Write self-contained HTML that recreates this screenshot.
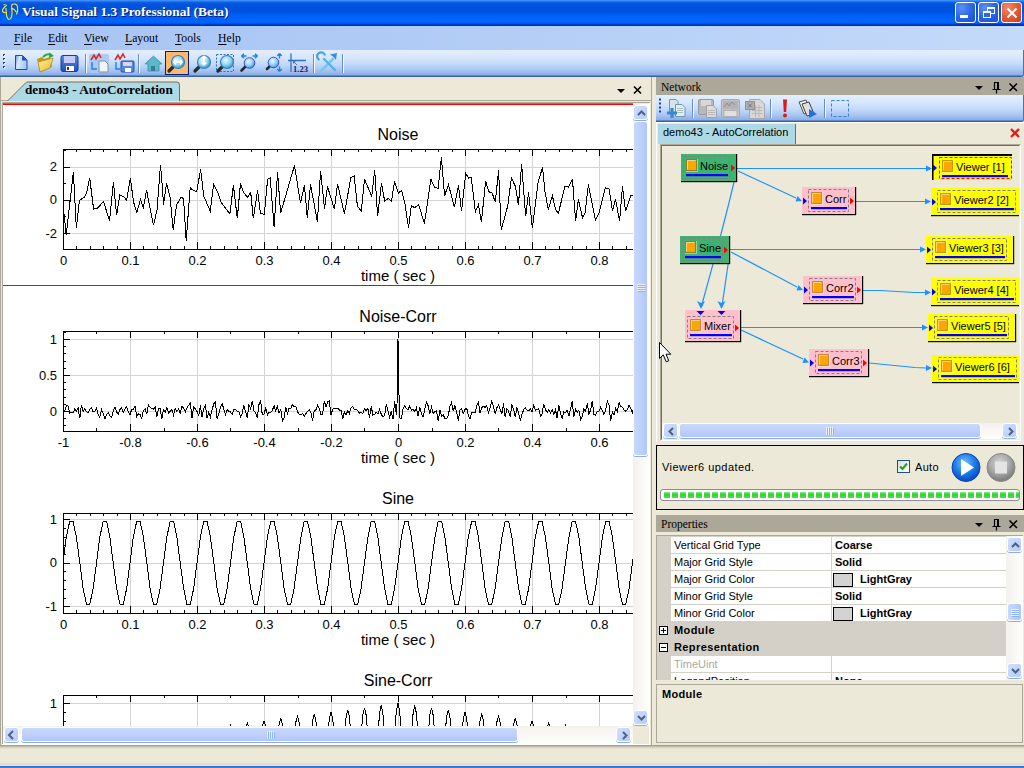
<!DOCTYPE html>
<html><head><meta charset="utf-8">
<style>
*{margin:0;padding:0;box-sizing:border-box}
html,body{width:1024px;height:768px;overflow:hidden;background:#ECE9D8;font-family:"Liberation Sans",sans-serif;font-size:11px;color:#000}
.a{position:absolute}
.serif{font-family:"Liberation Serif",serif}
/* title bar */
#title{left:0;top:0;width:1024px;height:26px;background:linear-gradient(#4A98FF 0,#2F80F8 1px,#0A5EE4 2.5px,#0052DC 5px,#0052DD 11px,#005EF4 15px,#0066FF 21px,#0060F8 23px,#0046D8 24px,#0030B0 25px,#0030B0 26px)}
#title .t{left:22px;top:4px;color:#fff;font:bold 13.4px "Liberation Serif",serif;text-shadow:1px 1px 0 #0A1C6A;white-space:nowrap;letter-spacing:0}
.tb{top:2px;width:21px;height:21px;border:1px solid #fff;border-radius:3px;background:radial-gradient(circle at 30% 25%,#5F8FF6 0,#2663E7 55%,#1B4FD6 100%)}
#menu{left:0;top:26px;width:1024px;height:24px;background:linear-gradient(to right,#A8C4F3,#B0CBF5 40%,#C4DAFA)}
#menu span{position:absolute;top:4px;font:13px "Liberation Serif",serif;white-space:nowrap;transform:scaleX(0.9);transform-origin:0 0}
#menu u{text-decoration:underline;text-underline-offset:2px}
#tbpanel{left:0;top:50px;width:1024px;height:27px;background:linear-gradient(to right,#A7C3F3,#C5DAF9)}
#tool{left:0;top:50px;width:1024px;height:27px;border-radius:0 0 3px 0;box-shadow:inset -1px 0 0 #4A70B0;background:linear-gradient(#E3EFFF 0,#D6E6FD 8px,#C4DAFA 14px,#A9C6F3 20px,#8AAEE8 25px,#3B619C 26px,#3B619C 27px)}
.sep{width:1px;height:19px;background:#6A8CCB;box-shadow:1px 0 0 #F8F8F8}
/* doc pane */
#doc{left:0;top:77px;width:652px;height:668px;background:#ECE9D8;border-left:1px solid #ACA899}
#docr{left:651px;top:77px;width:1px;height:668px;background:#ACA899}
#plot{left:3px;top:104px;width:630px;height:622px;background:#fff;overflow:hidden}
.sb{background:linear-gradient(to right,#F3F1EC,#FEFEFB)}
.btn{border:1px solid #fff;border-radius:3px;box-shadow:0 1px 0 #8FADE3;background:linear-gradient(135deg,#D2E0FD,#C3D5FD 50%,#B4CBF8)}
.net{font-size:11px}
.node{position:absolute;height:28px}
.tl{font:13px "Liberation Sans",sans-serif}
.tt{font:16px "Liberation Sans",sans-serif}
.ta{font:15px "Liberation Sans",sans-serif}
.cap{background:#ACA899;height:18px}
.pg{position:absolute;left:671px;width:335px;height:17px;background:#fff;border-bottom:1px solid #D4D0C8}
.pg span{position:absolute;top:3px;white-space:nowrap}
</style></head>
<body>
<!-- TITLE BAR -->
<div id="title" class="a">
  <svg class="a" style="left:0;top:0" width="20" height="22" viewBox="0 0 20 22">
    <path d="M3.5 4.5 L7 5.5 M6.5 5.5 C4 7.5 2 9.5 2.5 11 C3 12.5 5 13 7 12.5 M6 8 C6 13 7 19 9 19.5 C11 19.5 12.5 15.5 12 11 C11.5 8 11 6 12 4.5 C14 3.5 17 4 17.5 6.5 C18 9 17.5 12 16.5 14.5 M11 9 C13 8 15 9.5 16 12" fill="none" stroke="#E6E632" stroke-width="1.2"/>
    <rect x="8" y="11" width="2" height="1.2" fill="#C02020"/>
  </svg>
  <div class="a t">Visual Signal 1.3 Professional (Beta)</div>
  <div class="a tb" style="left:955px"><div class="a" style="left:4px;top:12px;width:8px;height:3px;background:#fff"></div></div>
  <div class="a tb" style="left:978px">
    <div class="a" style="left:8px;top:4px;width:8px;height:7px;border:1px solid #fff;border-top-width:2px"></div>
    <div class="a" style="left:4px;top:8px;width:8px;height:7px;border:1px solid #fff;border-top-width:2px;background:#2A66E8"></div>
  </div>
  <div class="a tb" style="left:1001px;background:radial-gradient(circle at 30% 25%,#F08A6A 0,#E3552D 55%,#C8401A 100%)">
    <svg class="a" style="left:4px;top:4px" width="12" height="12"><path d="M1.5 1.5 L10.5 10.5 M10.5 1.5 L1.5 10.5" stroke="#fff" stroke-width="2"/></svg>
  </div>
</div>
<!-- MENU -->
<div id="menu" class="a">
  <span style="left:14px"><u>F</u>ile</span>
  <span style="left:48px"><u>E</u>dit</span>
  <span style="left:84px"><u>V</u>iew</span>
  <span style="left:125px"><u>L</u>ayout</span>
  <span style="left:175px"><u>T</u>ools</span>
  <span style="left:218px"><u>H</u>elp</span>
</div>
<!-- TOOLBAR -->
<div id="tbpanel" class="a"></div>
<div id="tool" class="a">
<svg class="a" style="left:0;top:0" width="360" height="27">
<defs>
  <radialGradient id="lens" cx="40%" cy="35%" r="65%"><stop offset="0" stop-color="#E8F8FF"/><stop offset="0.6" stop-color="#8ED3F0"/><stop offset="1" stop-color="#3C9AD0"/></radialGradient>
  <linearGradient id="flop" x1="0" y1="0" x2="0" y2="1"><stop offset="0" stop-color="#5B8BE8"/><stop offset="1" stop-color="#1F4FB8"/></linearGradient>
  <linearGradient id="fold" x1="0" y1="0" x2="1" y2="1"><stop offset="0" stop-color="#FFF3A0"/><stop offset="1" stop-color="#E8B820"/></linearGradient>
  <g id="mag">
    <path d="M3 19 L8 14" stroke="#2A2A2A" stroke-width="3.2" stroke-linecap="round"/>
    <circle cx="12" cy="10" r="6.5" fill="url(#lens)" stroke="#3E7FB8" stroke-width="1.2"/>
  </g>
</defs>
<!-- grip -->
<g fill="#27417F"><rect x="3" y="4" width="2" height="2"/><rect x="3" y="8" width="2" height="2"/><rect x="3" y="12" width="2" height="2"/><rect x="3" y="16" width="2" height="2"/></g>
<g fill="#fff"><rect x="4" y="5" width="1.5" height="1.5"/><rect x="4" y="9" width="1.5" height="1.5"/><rect x="4" y="13" width="1.5" height="1.5"/><rect x="4" y="17" width="1.5" height="1.5"/></g>
<!-- new -->
<linearGradient id="pg1" x1="0" y1="0" x2="1" y2="0.3"><stop offset="0" stop-color="#5C8EE0"/><stop offset="0.35" stop-color="#D8E8FF"/><stop offset="1" stop-color="#A8C8F8"/></linearGradient>
<path d="M15.5 5.5 H22.5 L27 10 V19.5 H15.5 Z" fill="url(#pg1)" stroke="#2048A8"/>
<path d="M22 5.5 L27 10.5 H22 Z" fill="#2050C0"/>
<!-- open -->
<path d="M37 9 L42 7 L44 9 L50 7 L52 17 L40 22 Z" fill="#C89810"/>
<path d="M38 12 L53 8 L50 18 L40 22 Z" fill="url(#fold)" stroke="#B08010" stroke-width="0.7"/>
<path d="M43 7 Q47 3 51 5" fill="none" stroke="#28A838" stroke-width="2"/><path d="M49.5 2.5 L54 6 L49 8 Z" fill="#28A838"/>
<!-- save -->
<rect x="61" y="5.5" width="17" height="16" rx="2" fill="url(#flop)" stroke="#1A3C90"/>
<rect x="64" y="6" width="11" height="7" fill="#C8C8F8"/>
<rect x="66" y="16" width="8" height="5" fill="#fff"/><rect x="67" y="17" width="2" height="3" fill="#1A3C90"/>
<rect class="sep" x="85" y="4" width="1" height="19" fill="#6A8CCB"/><rect x="86" y="4" width="1" height="19" fill="#F8F8F8"/>
<!-- export doc -->
<rect x="89" y="4" width="20" height="19" rx="2" fill="#A8C8F4" opacity="0.9"/>
<path d="M91 10 L94 5 L96 9 L99 4 L101 8" fill="none" stroke="#E02020" stroke-width="1.5"/>
<path d="M99 11 H105 L108 14 V22 H99 Z" fill="#F0F4F8" stroke="#8090A0"/>
<path d="M92 12 V19 H97" fill="none" stroke="#2080E0" stroke-width="1.4"/>
<!-- export floppy -->
<path d="M115 10 L118 5 L120 9 L123 4 L125 8" fill="none" stroke="#E02020" stroke-width="1.5"/>
<rect x="121" y="11" width="13" height="11" rx="1" fill="#5A86E0" stroke="#2050B0"/>
<rect x="123" y="12" width="9" height="4" fill="#D0D8F8"/><rect x="125" y="18" width="6" height="4" fill="#fff"/>
<path d="M116 12 V19 H120" fill="none" stroke="#2080E0" stroke-width="1.4"/>
<rect x="138" y="4" width="1" height="19" fill="#6A8CCB"/><rect x="139" y="4" width="1" height="19" fill="#F8F8F8"/>
<!-- home -->
<path d="M145 14 L153.5 6 L162 14 L159 14 V21 H148 V14 Z" fill="#5CB8C8" stroke="#3890A8" stroke-width="0.8"/>
<rect x="151" y="16" width="4" height="5" fill="#2E8098"/>
<!-- checked zoom -->
<rect x="165.5" y="1.5" width="23" height="23" fill="#FBB870" stroke="#0A1E78"/>

<use href="#mag" x="166" y="2"/>
<path d="M173.5 12 h9 M173.5 12 l2.5 -2.5 M173.5 12 l2.5 2.5 M182.5 12 l-2.5 -2.5 M182.5 12 l-2.5 2.5" stroke="#fff" stroke-width="1.4" fill="none"/>
<!-- zoom v -->
<use href="#mag" x="192" y="2"/>
<path d="M204 6 v9 M204 6 l-2.5 2.5 M204 6 l2.5 2.5 M204 15 l-2.5 -2.5 M204 15 l2.5 -2.5" stroke="#fff" stroke-width="1.5" fill="none"/>
<!-- zoom rect -->
<rect x="216.5" y="4.5" width="17" height="17" fill="none" stroke="#3070D0" stroke-dasharray="2 1.5"/>
<use href="#mag" x="215" y="2"/>
<!-- zoom h arrows -->
<path d="M241.5 20.5 L246 16" stroke="#2A2A2A" stroke-width="2.6" stroke-linecap="round"/>
<circle cx="249.5" cy="13" r="5.3" fill="url(#lens)" stroke="#3A3AE8" stroke-width="0.9"/>
<path d="M241.5 6 h5 M241.5 6 l2.5 -2.2 M241.5 6 l2.5 2.2 M257.5 6 h-5 M257.5 6 l-2.5 -2.2 M257.5 6 l-2.5 2.2" stroke="#2080E0" stroke-width="1.4" fill="none"/>
<!-- zoom v arrows -->
<path d="M267 19 L271.5 14.5" stroke="#2A2A2A" stroke-width="2.6" stroke-linecap="round"/>
<circle cx="273.5" cy="12.5" r="5.3" fill="url(#lens)" stroke="#3A3AE8" stroke-width="0.9"/>
<path d="M279.5 3.5 v5 M279.5 3.5 l-2.2 2.5 M279.5 3.5 l2.2 2.5 M279.5 21.5 v-5 M279.5 21.5 l-2.2 -2.5 M279.5 21.5 l2.2 -2.5" stroke="#2080E0" stroke-width="1.4" fill="none"/>
<!-- 1.23 -->
<path d="M291 3.5 V22 M288 10.5 H306" stroke="#3070D0" stroke-width="1.3"/>
<path d="M297 15 L293.5 11.5 M293.5 11.5 h2 M293.5 11.5 v2" stroke="#3070D0" stroke-width="0.9" fill="none"/>
<text x="293" y="21.5" font-family="Liberation Serif" font-weight="bold" font-size="8.5" fill="#1A2060">1.23</text>
<rect x="313" y="4" width="1" height="19" fill="#6A8CCB"/><rect x="314" y="4" width="1" height="19" fill="#F8F8F8"/>
<!-- tools -->
<path d="M321 21 L333 9" stroke="#78C8EE" stroke-width="2.6" stroke-linecap="round"/>
<path d="M324 9 L335 20" stroke="#58B0E8" stroke-width="2.4" stroke-linecap="round"/>
<path d="M319.5 10 A4 4 0 1 1 325 5.5" fill="none" stroke="#4AA0E0" stroke-width="2.2"/>
<path d="M330 4.5 L337 3 L336 10 Q333 6 330 4.5 Z" fill="#3890D8"/>
<rect x="342" y="4" width="1" height="19" fill="#6A8CCB"/><rect x="343" y="4" width="1" height="19" fill="#F8F8F8"/>
</svg>

</div>
<!-- DOC PANE -->
<div id="doc" class="a"></div><div id="docr" class="a"></div>
<!-- tab strip -->
<div class="a" style="left:0;top:100px;width:651px;height:1px;background:#ACA899"></div>
<svg class="a" style="left:0;top:77px" width="190" height="25">
  <path d="M7.5 24 L25.5 6 Q26.5 5 28 5 L177 5 Q179.5 5 179.5 8 L179.5 24" fill="#ADD8E6" stroke="#716F64" stroke-width="1"/>
</svg>
<div class="a serif" style="left:25px;top:82px;font:bold 13.2px 'Liberation Serif',serif;white-space:nowrap">demo43 - AutoCorrelation</div>
<svg class="a" style="left:616px;top:85px" width="30" height="12">
  <path d="M1 4 L9 4 L5 8 Z" fill="#000"/>
  <path d="M18 1.5 L25 8.5 M25 1.5 L18 8.5" stroke="#000" stroke-width="1.6"/>
</svg>
<!-- content frame -->
<div class="a" style="left:2px;top:102px;width:648px;height:1px;background:#ACA899"></div>
<div class="a" style="left:2px;top:103px;width:631px;height:1px;background:#808080"></div>
<div class="a" style="left:2px;top:102px;width:1px;height:643px;background:#ACA899"></div>
<div class="a" style="left:649px;top:103px;width:1px;height:642px;background:#fff"></div>
<div class="a" style="left:2px;top:744px;width:648px;height:1px;background:#fff"></div>
<div id="plot" class="a">
<svg width="630" height="622" viewBox="3 104 630 622" style="display:block">
<line x1="3" y1="104.5" x2="633" y2="104.5" stroke="#f00" stroke-width="1"/>
<line x1="3" y1="285.5" x2="633" y2="285.5" stroke="#f00" stroke-width="1"/>
<line x1="130.5" y1="149" x2="130.5" y2="249" stroke="#d3d3d3"/>
<line x1="197.5" y1="149" x2="197.5" y2="249" stroke="#d3d3d3"/>
<line x1="264.5" y1="149" x2="264.5" y2="249" stroke="#d3d3d3"/>
<line x1="331.5" y1="149" x2="331.5" y2="249" stroke="#d3d3d3"/>
<line x1="398.5" y1="149" x2="398.5" y2="249" stroke="#d3d3d3"/>
<line x1="465.5" y1="149" x2="465.5" y2="249" stroke="#d3d3d3"/>
<line x1="532.5" y1="149" x2="532.5" y2="249" stroke="#d3d3d3"/>
<line x1="599.5" y1="149" x2="599.5" y2="249" stroke="#d3d3d3"/>
<line x1="666.5" y1="149" x2="666.5" y2="249" stroke="#d3d3d3"/>
<line x1="733.5" y1="149" x2="733.5" y2="249" stroke="#d3d3d3"/>
<line x1="63" y1="167.5" x2="733" y2="167.5" stroke="#d3d3d3"/>
<line x1="63" y1="200.5" x2="733" y2="200.5" stroke="#d3d3d3"/>
<line x1="63" y1="233.5" x2="733" y2="233.5" stroke="#d3d3d3"/>
<polyline fill="none" stroke="#000" stroke-width="1" shape-rendering="crispEdges" points="63.6,209.9 66.2,234.6 70.4,198.2 73.4,172.1 76.3,228.1 79.5,200.1 84.1,197.5 86.7,193.0 89.7,178.0 93.6,209.2 97.8,207.9 103.6,201.4 109.5,221.0 113.4,181.9 116.6,215.1 119.9,194.9 123.8,196.9 126.7,200.1 130.3,178.0 133.6,202.1 136.8,212.5 140.5,199.5 143.3,207.9 146.6,190.4 153.5,225.3 157.0,209.9 158.9,185.2 160.5,165.4 162.2,185.2 163.5,204.7 166.5,183.2 170.0,196.9 173.2,230.1 176.5,205.3 181.0,197.1 183.6,198.8 186.2,240.5 190.2,187.8 193.4,190.4 196.7,191.7 200.6,169.5 203.8,196.2 210.3,211.2 213.6,184.5 217.5,191.7 221.4,202.7 229.9,213.8 233.4,185.2 237.3,218.4 240.5,183.2 243.5,192.3 247.7,197.5 250.7,192.3 253.3,218.4 257.6,190.4 260.4,213.2 264.3,214.5 267.6,179.3 270.2,178.0 274.1,226.8 277.6,172.1 280.6,213.2 294.5,165.4 300.5,203.4 304.4,185.2 307.3,217.7 310.5,184.5 317.4,221.6 320.6,171.1 324.5,208.6 327.5,186.5 334.4,209.2 337.5,183.6 344.4,213.8 350.9,177.3 354.1,176.0 357.4,206.0 361.3,211.2 364.5,179.3 371.7,196.2 374.7,170.2 377.6,216.4 381.5,183.2 384.7,201.4 388.0,198.4 391.6,201.4 394.5,181.2 398.4,193.0 401.6,190.4 404.9,203.4 408.5,227.5 411.4,205.3 414.7,207.9 418.6,204.4 424.4,223.6 430.9,179.3 434.6,187.1 438.1,188.4 441.4,157.2 444.6,195.6 448.5,184.5 454.3,207.3 458.5,185.2 461.5,211.2 465.7,173.4 468.6,178.0 471.2,177.3 475.4,211.8 478.4,204.7 481.4,222.3 485.6,181.2 488.8,191.7 492.1,193.0 495.3,202.1 498.6,170.2 501.2,230.1 507.7,206.0 511.4,178.0 515.5,186.5 518.4,205.3 521.6,164.3 525.7,216.4 528.5,192.3 532.4,228.1 538.3,181.2 542.6,167.6 544.8,190.4 548.3,209.9 552.3,195.6 555.8,209.9 558.4,213.2 564.9,186.5 568.2,187.1 572.5,179.7 575.6,221.0 578.4,199.5 582.5,217.7 585.1,212.5 588.4,184.5 595.5,220.3 598.8,213.8 605.3,187.8 609.2,189.1 612.5,211.2 615.5,199.5 619.6,221.0 622.5,186.5 625.5,211.2 630.7,195.6 634.0,195.6"/>
<rect x="63.5" y="149.5" width="670" height="100" fill="none" stroke="#000"/>
<line x1="63.5" y1="149" x2="63.5" y2="156" stroke="#000"/>
<line x1="63.5" y1="249" x2="63.5" y2="242" stroke="#000"/>
<line x1="76.5" y1="149" x2="76.5" y2="152" stroke="#000"/>
<line x1="76.5" y1="249" x2="76.5" y2="246" stroke="#000"/>
<line x1="90.5" y1="149" x2="90.5" y2="152" stroke="#000"/>
<line x1="90.5" y1="249" x2="90.5" y2="246" stroke="#000"/>
<line x1="103.5" y1="149" x2="103.5" y2="152" stroke="#000"/>
<line x1="103.5" y1="249" x2="103.5" y2="246" stroke="#000"/>
<line x1="117.5" y1="149" x2="117.5" y2="152" stroke="#000"/>
<line x1="117.5" y1="249" x2="117.5" y2="246" stroke="#000"/>
<line x1="130.5" y1="149" x2="130.5" y2="156" stroke="#000"/>
<line x1="130.5" y1="249" x2="130.5" y2="242" stroke="#000"/>
<line x1="143.5" y1="149" x2="143.5" y2="152" stroke="#000"/>
<line x1="143.5" y1="249" x2="143.5" y2="246" stroke="#000"/>
<line x1="157.5" y1="149" x2="157.5" y2="152" stroke="#000"/>
<line x1="157.5" y1="249" x2="157.5" y2="246" stroke="#000"/>
<line x1="170.5" y1="149" x2="170.5" y2="152" stroke="#000"/>
<line x1="170.5" y1="249" x2="170.5" y2="246" stroke="#000"/>
<line x1="184.5" y1="149" x2="184.5" y2="152" stroke="#000"/>
<line x1="184.5" y1="249" x2="184.5" y2="246" stroke="#000"/>
<line x1="197.5" y1="149" x2="197.5" y2="156" stroke="#000"/>
<line x1="197.5" y1="249" x2="197.5" y2="242" stroke="#000"/>
<line x1="210.5" y1="149" x2="210.5" y2="152" stroke="#000"/>
<line x1="210.5" y1="249" x2="210.5" y2="246" stroke="#000"/>
<line x1="224.5" y1="149" x2="224.5" y2="152" stroke="#000"/>
<line x1="224.5" y1="249" x2="224.5" y2="246" stroke="#000"/>
<line x1="237.5" y1="149" x2="237.5" y2="152" stroke="#000"/>
<line x1="237.5" y1="249" x2="237.5" y2="246" stroke="#000"/>
<line x1="251.5" y1="149" x2="251.5" y2="152" stroke="#000"/>
<line x1="251.5" y1="249" x2="251.5" y2="246" stroke="#000"/>
<line x1="264.5" y1="149" x2="264.5" y2="156" stroke="#000"/>
<line x1="264.5" y1="249" x2="264.5" y2="242" stroke="#000"/>
<line x1="277.5" y1="149" x2="277.5" y2="152" stroke="#000"/>
<line x1="277.5" y1="249" x2="277.5" y2="246" stroke="#000"/>
<line x1="291.5" y1="149" x2="291.5" y2="152" stroke="#000"/>
<line x1="291.5" y1="249" x2="291.5" y2="246" stroke="#000"/>
<line x1="304.5" y1="149" x2="304.5" y2="152" stroke="#000"/>
<line x1="304.5" y1="249" x2="304.5" y2="246" stroke="#000"/>
<line x1="318.5" y1="149" x2="318.5" y2="152" stroke="#000"/>
<line x1="318.5" y1="249" x2="318.5" y2="246" stroke="#000"/>
<line x1="331.5" y1="149" x2="331.5" y2="156" stroke="#000"/>
<line x1="331.5" y1="249" x2="331.5" y2="242" stroke="#000"/>
<line x1="344.5" y1="149" x2="344.5" y2="152" stroke="#000"/>
<line x1="344.5" y1="249" x2="344.5" y2="246" stroke="#000"/>
<line x1="358.5" y1="149" x2="358.5" y2="152" stroke="#000"/>
<line x1="358.5" y1="249" x2="358.5" y2="246" stroke="#000"/>
<line x1="371.5" y1="149" x2="371.5" y2="152" stroke="#000"/>
<line x1="371.5" y1="249" x2="371.5" y2="246" stroke="#000"/>
<line x1="385.5" y1="149" x2="385.5" y2="152" stroke="#000"/>
<line x1="385.5" y1="249" x2="385.5" y2="246" stroke="#000"/>
<line x1="398.5" y1="149" x2="398.5" y2="156" stroke="#000"/>
<line x1="398.5" y1="249" x2="398.5" y2="242" stroke="#000"/>
<line x1="411.5" y1="149" x2="411.5" y2="152" stroke="#000"/>
<line x1="411.5" y1="249" x2="411.5" y2="246" stroke="#000"/>
<line x1="425.5" y1="149" x2="425.5" y2="152" stroke="#000"/>
<line x1="425.5" y1="249" x2="425.5" y2="246" stroke="#000"/>
<line x1="438.5" y1="149" x2="438.5" y2="152" stroke="#000"/>
<line x1="438.5" y1="249" x2="438.5" y2="246" stroke="#000"/>
<line x1="452.5" y1="149" x2="452.5" y2="152" stroke="#000"/>
<line x1="452.5" y1="249" x2="452.5" y2="246" stroke="#000"/>
<line x1="465.5" y1="149" x2="465.5" y2="156" stroke="#000"/>
<line x1="465.5" y1="249" x2="465.5" y2="242" stroke="#000"/>
<line x1="478.5" y1="149" x2="478.5" y2="152" stroke="#000"/>
<line x1="478.5" y1="249" x2="478.5" y2="246" stroke="#000"/>
<line x1="492.5" y1="149" x2="492.5" y2="152" stroke="#000"/>
<line x1="492.5" y1="249" x2="492.5" y2="246" stroke="#000"/>
<line x1="505.5" y1="149" x2="505.5" y2="152" stroke="#000"/>
<line x1="505.5" y1="249" x2="505.5" y2="246" stroke="#000"/>
<line x1="519.5" y1="149" x2="519.5" y2="152" stroke="#000"/>
<line x1="519.5" y1="249" x2="519.5" y2="246" stroke="#000"/>
<line x1="532.5" y1="149" x2="532.5" y2="156" stroke="#000"/>
<line x1="532.5" y1="249" x2="532.5" y2="242" stroke="#000"/>
<line x1="545.5" y1="149" x2="545.5" y2="152" stroke="#000"/>
<line x1="545.5" y1="249" x2="545.5" y2="246" stroke="#000"/>
<line x1="559.5" y1="149" x2="559.5" y2="152" stroke="#000"/>
<line x1="559.5" y1="249" x2="559.5" y2="246" stroke="#000"/>
<line x1="572.5" y1="149" x2="572.5" y2="152" stroke="#000"/>
<line x1="572.5" y1="249" x2="572.5" y2="246" stroke="#000"/>
<line x1="586.5" y1="149" x2="586.5" y2="152" stroke="#000"/>
<line x1="586.5" y1="249" x2="586.5" y2="246" stroke="#000"/>
<line x1="599.5" y1="149" x2="599.5" y2="156" stroke="#000"/>
<line x1="599.5" y1="249" x2="599.5" y2="242" stroke="#000"/>
<line x1="612.5" y1="149" x2="612.5" y2="152" stroke="#000"/>
<line x1="612.5" y1="249" x2="612.5" y2="246" stroke="#000"/>
<line x1="626.5" y1="149" x2="626.5" y2="152" stroke="#000"/>
<line x1="626.5" y1="249" x2="626.5" y2="246" stroke="#000"/>
<line x1="639.5" y1="149" x2="639.5" y2="152" stroke="#000"/>
<line x1="639.5" y1="249" x2="639.5" y2="246" stroke="#000"/>
<line x1="653.5" y1="149" x2="653.5" y2="152" stroke="#000"/>
<line x1="653.5" y1="249" x2="653.5" y2="246" stroke="#000"/>
<line x1="666.5" y1="149" x2="666.5" y2="156" stroke="#000"/>
<line x1="666.5" y1="249" x2="666.5" y2="242" stroke="#000"/>
<line x1="679.5" y1="149" x2="679.5" y2="152" stroke="#000"/>
<line x1="679.5" y1="249" x2="679.5" y2="246" stroke="#000"/>
<line x1="693.5" y1="149" x2="693.5" y2="152" stroke="#000"/>
<line x1="693.5" y1="249" x2="693.5" y2="246" stroke="#000"/>
<line x1="706.5" y1="149" x2="706.5" y2="152" stroke="#000"/>
<line x1="706.5" y1="249" x2="706.5" y2="246" stroke="#000"/>
<line x1="720.5" y1="149" x2="720.5" y2="152" stroke="#000"/>
<line x1="720.5" y1="249" x2="720.5" y2="246" stroke="#000"/>
<line x1="733.5" y1="149" x2="733.5" y2="156" stroke="#000"/>
<line x1="733.5" y1="249" x2="733.5" y2="242" stroke="#000"/>
<line x1="63" y1="233.5" x2="70" y2="233.5" stroke="#000"/>
<line x1="63" y1="216.5" x2="66" y2="216.5" stroke="#000"/>
<line x1="63" y1="200.5" x2="70" y2="200.5" stroke="#000"/>
<line x1="63" y1="183.5" x2="66" y2="183.5" stroke="#000"/>
<line x1="63" y1="167.5" x2="70" y2="167.5" stroke="#000"/>
<line x1="63" y1="150.5" x2="66" y2="150.5" stroke="#000"/>
<text x="63.5" y="265" text-anchor="middle" class="tl">0</text>
<text x="130.5" y="265" text-anchor="middle" class="tl">0.1</text>
<text x="197.5" y="265" text-anchor="middle" class="tl">0.2</text>
<text x="264.5" y="265" text-anchor="middle" class="tl">0.3</text>
<text x="331.5" y="265" text-anchor="middle" class="tl">0.4</text>
<text x="398.5" y="265" text-anchor="middle" class="tl">0.5</text>
<text x="465.5" y="265" text-anchor="middle" class="tl">0.6</text>
<text x="532.5" y="265" text-anchor="middle" class="tl">0.7</text>
<text x="599.5" y="265" text-anchor="middle" class="tl">0.8</text>
<text x="666.5" y="265" text-anchor="middle" class="tl">0.9</text>
<text x="733.5" y="265" text-anchor="middle" class="tl">1</text>
<text x="57" y="171.2" text-anchor="end" class="tl">2</text>
<text x="57" y="204.4" text-anchor="end" class="tl">0</text>
<text x="57" y="237.60000000000002" text-anchor="end" class="tl">-2</text>
<text x="398" y="140" text-anchor="middle" class="tt">Noise</text>
<text x="398" y="281" text-anchor="middle" class="ta">time ( sec )</text>
<line x1="130.5" y1="331" x2="130.5" y2="431" stroke="#d3d3d3"/>
<line x1="197.5" y1="331" x2="197.5" y2="431" stroke="#d3d3d3"/>
<line x1="264.5" y1="331" x2="264.5" y2="431" stroke="#d3d3d3"/>
<line x1="331.5" y1="331" x2="331.5" y2="431" stroke="#d3d3d3"/>
<line x1="398.5" y1="331" x2="398.5" y2="431" stroke="#d3d3d3"/>
<line x1="465.5" y1="331" x2="465.5" y2="431" stroke="#d3d3d3"/>
<line x1="532.5" y1="331" x2="532.5" y2="431" stroke="#d3d3d3"/>
<line x1="599.5" y1="331" x2="599.5" y2="431" stroke="#d3d3d3"/>
<line x1="666.5" y1="331" x2="666.5" y2="431" stroke="#d3d3d3"/>
<line x1="733.5" y1="331" x2="733.5" y2="431" stroke="#d3d3d3"/>
<line x1="63" y1="339.5" x2="733" y2="339.5" stroke="#d3d3d3"/>
<line x1="63" y1="375.5" x2="733" y2="375.5" stroke="#d3d3d3"/>
<line x1="63" y1="411.5" x2="733" y2="411.5" stroke="#d3d3d3"/>
<polyline fill="none" stroke="#000" stroke-width="1" shape-rendering="crispEdges" points="64.7,410.9 66.4,405.6 68.0,406.1 69.7,413.0 71.4,412.2 73.1,413.1 74.7,408.7 76.4,411.2 78.1,408.0 79.8,418.4 81.4,404.7 83.1,411.4 84.8,408.2 86.4,411.6 88.1,412.5 89.8,409.1 91.5,407.6 93.1,411.8 94.8,411.6 96.5,408.2 98.2,414.6 99.8,417.2 101.5,409.4 103.2,413.8 104.9,419.0 106.6,414.4 108.2,412.9 109.9,416.0 111.6,417.2 113.2,410.8 114.9,407.2 116.6,412.0 118.3,414.1 120.0,409.4 121.6,408.0 123.3,412.3 125.0,408.7 126.6,406.6 128.3,411.9 130.0,414.5 131.7,409.5 133.3,409.9 135.0,406.3 136.7,416.5 138.4,413.8 140.1,414.6 141.7,418.5 143.4,410.5 145.1,408.7 146.8,414.2 148.4,405.0 150.1,407.4 151.8,408.3 153.4,409.3 155.1,406.8 156.8,416.8 158.5,408.3 160.2,408.4 161.8,418.8 163.5,409.5 165.2,412.1 166.9,407.6 168.5,412.9 170.2,411.1 171.9,409.5 173.5,414.9 175.2,408.3 176.9,411.5 178.6,408.8 180.2,413.3 181.9,406.1 183.6,408.3 185.3,411.8 186.9,408.2 188.6,405.3 190.3,402.9 192.0,418.1 193.7,407.0 195.3,408.9 197.0,411.4 198.7,415.6 200.4,405.3 202.0,416.8 203.7,408.4 205.4,405.0 207.1,418.3 208.7,412.4 210.4,417.0 212.1,409.9 213.7,404.0 215.4,401.7 217.1,419.2 218.8,413.7 220.4,407.7 222.1,403.7 223.8,409.0 225.5,414.5 227.2,409.6 228.8,411.1 230.5,412.0 232.2,414.4 233.8,409.2 235.5,409.6 237.2,411.4 238.9,412.0 240.6,417.1 242.2,413.3 243.9,405.3 245.6,411.9 247.3,417.8 248.9,404.6 250.6,408.5 252.3,400.9 254.0,410.7 255.6,413.2 257.3,417.9 259.0,404.6 260.7,400.9 262.3,415.0 264.0,414.1 265.7,408.1 267.4,415.0 269.0,412.3 270.7,412.7 272.4,410.1 274.1,405.7 275.7,410.9 277.4,406.5 279.1,413.1 280.8,409.4 282.4,421.1 284.1,418.1 285.8,407.1 287.4,413.9 289.1,408.1 290.8,408.3 292.5,404.5 294.1,407.0 295.8,406.0 297.5,411.6 299.2,414.5 300.9,414.6 302.5,413.4 304.2,416.6 305.9,413.7 307.5,411.5 309.2,409.7 310.9,412.7 312.6,420.7 314.2,411.4 315.9,409.9 317.6,405.5 319.3,408.1 320.9,414.3 322.6,414.7 324.3,400.9 326.0,407.1 327.7,401.7 329.3,400.9 331.0,415.2 332.7,409.0 334.4,408.7 336.0,408.1 337.7,408.2 339.4,410.0 341.1,410.1 342.7,418.8 344.4,411.9 346.1,414.9 347.8,410.3 349.4,413.4 351.1,407.8 352.8,406.7 354.4,409.4 356.1,409.3 357.8,410.5 359.5,413.3 361.1,411.9 362.8,413.6 364.5,409.0 366.2,410.9 367.9,407.9 369.5,418.0 371.2,406.3 372.9,415.0 374.5,414.9 376.2,412.0 377.9,414.0 379.6,409.5 381.2,414.1 382.9,416.7 384.6,415.5 386.3,404.0 387.9,410.8 389.6,417.3 391.3,411.0 393.0,419.4 394.6,401.4 396.5,415.0 397.4,395.0 397.6,359.0 398.0,339.0 398.6,379.0 399.3,405.0 400.0,418.0 401.4,418.8 403.0,409.4 404.7,405.6 406.4,408.5 408.1,409.6 409.7,405.9 411.4,410.1 413.1,409.2 414.8,411.7 416.4,407.6 418.1,416.0 419.8,406.8 421.5,413.7 423.1,416.8 424.8,409.1 426.5,402.1 428.2,405.9 429.8,413.7 431.5,407.3 433.2,413.4 434.9,411.7 436.5,410.5 438.2,421.1 439.9,410.0 441.5,416.4 443.2,414.6 444.9,418.7 446.6,418.9 448.2,415.9 449.9,406.7 451.6,402.4 453.3,411.1 454.9,405.4 456.6,412.4 458.3,420.8 460.0,410.2 461.6,408.7 463.3,413.2 465.0,409.5 466.7,408.1 468.3,415.4 470.0,418.5 471.7,412.1 473.4,412.1 475.1,412.8 476.7,406.0 478.4,402.3 480.1,413.1 481.8,407.5 483.4,406.3 485.1,407.4 486.8,405.7 488.4,413.0 490.1,407.3 491.8,400.9 493.5,407.0 495.2,414.1 496.8,408.0 498.5,404.7 500.2,409.2 501.9,413.8 503.5,403.4 505.2,417.2 506.9,408.5 508.6,411.1 510.2,416.9 511.9,405.0 513.6,409.3 515.2,416.7 516.9,408.1 518.6,413.1 520.3,420.3 522.0,414.4 523.6,409.7 525.3,407.9 527.0,410.2 528.7,410.8 530.3,408.7 532.0,412.0 533.7,405.3 535.3,410.3 537.0,409.6 538.7,408.4 540.4,416.1 542.0,414.4 543.7,403.7 545.4,409.4 547.1,412.3 548.8,409.4 550.4,413.3 552.1,409.7 553.8,414.1 555.5,409.7 557.1,418.4 558.8,404.7 560.5,413.4 562.1,418.4 563.8,412.0 565.5,412.7 567.2,410.3 568.9,416.3 570.5,409.1 572.2,400.9 573.9,416.9 575.5,409.4 577.2,412.4 578.9,410.1 580.6,419.4 582.2,416.3 583.9,408.9 585.6,411.2 587.3,403.5 588.9,414.2 590.6,410.2 592.3,400.9 594.0,414.5 595.6,415.1 597.3,411.2 599.0,411.2 600.7,407.2 602.3,410.4 604.0,414.4 605.7,410.0 607.4,400.9 609.0,405.3 610.7,421.1 612.4,411.6 614.1,414.9 615.8,408.2 617.4,411.8 619.1,402.4 620.8,406.9 622.4,407.1 624.1,410.2 625.8,411.2 627.5,409.5 629.1,405.3 630.8,408.6 632.5,412.5 634.2,405.4 635.9,410.2 637.5,411.3 639.2,414.5 640.9,413.5 642.5,413.8 644.2,421.1 645.9,406.6 647.6,408.5 649.2,411.9 650.9,406.5 652.6,409.1 654.3,409.4 656.0,421.1 657.6,412.0 659.3,408.7 661.0,404.1 662.6,403.2 664.3,404.9 666.0,415.9 667.7,420.3 669.4,408.6 671.0,410.9 672.7,406.9 674.4,411.5 676.1,410.1 677.7,417.3 679.4,409.1 681.1,412.9 682.8,409.5 684.4,409.1 686.1,411.5 687.8,409.7 689.5,411.1 691.1,407.9 692.8,408.9 694.5,413.3 696.2,413.4 697.8,403.8 699.5,411.4 701.2,406.9 702.9,409.4 704.5,413.3 706.2,414.1 707.9,410.5 709.6,410.0 711.2,408.5 712.9,416.1 714.6,413.4 716.2,411.4 717.9,404.6 719.6,420.5 721.3,409.2 723.0,413.2 724.6,409.3 726.3,413.0 728.0,409.5 729.6,404.8 731.3,409.6"/>
<rect x="63.5" y="331.5" width="670" height="100" fill="none" stroke="#000"/>
<line x1="63.5" y1="331" x2="63.5" y2="338" stroke="#000"/>
<line x1="63.5" y1="431" x2="63.5" y2="424" stroke="#000"/>
<line x1="96.5" y1="331" x2="96.5" y2="334" stroke="#000"/>
<line x1="96.5" y1="431" x2="96.5" y2="428" stroke="#000"/>
<line x1="130.5" y1="331" x2="130.5" y2="338" stroke="#000"/>
<line x1="130.5" y1="431" x2="130.5" y2="424" stroke="#000"/>
<line x1="164.5" y1="331" x2="164.5" y2="334" stroke="#000"/>
<line x1="164.5" y1="431" x2="164.5" y2="428" stroke="#000"/>
<line x1="197.5" y1="331" x2="197.5" y2="338" stroke="#000"/>
<line x1="197.5" y1="431" x2="197.5" y2="424" stroke="#000"/>
<line x1="230.5" y1="331" x2="230.5" y2="334" stroke="#000"/>
<line x1="230.5" y1="431" x2="230.5" y2="428" stroke="#000"/>
<line x1="264.5" y1="331" x2="264.5" y2="338" stroke="#000"/>
<line x1="264.5" y1="431" x2="264.5" y2="424" stroke="#000"/>
<line x1="298.5" y1="331" x2="298.5" y2="334" stroke="#000"/>
<line x1="298.5" y1="431" x2="298.5" y2="428" stroke="#000"/>
<line x1="331.5" y1="331" x2="331.5" y2="338" stroke="#000"/>
<line x1="331.5" y1="431" x2="331.5" y2="424" stroke="#000"/>
<line x1="364.5" y1="331" x2="364.5" y2="334" stroke="#000"/>
<line x1="364.5" y1="431" x2="364.5" y2="428" stroke="#000"/>
<line x1="398.5" y1="331" x2="398.5" y2="338" stroke="#000"/>
<line x1="398.5" y1="431" x2="398.5" y2="424" stroke="#000"/>
<line x1="432.5" y1="331" x2="432.5" y2="334" stroke="#000"/>
<line x1="432.5" y1="431" x2="432.5" y2="428" stroke="#000"/>
<line x1="465.5" y1="331" x2="465.5" y2="338" stroke="#000"/>
<line x1="465.5" y1="431" x2="465.5" y2="424" stroke="#000"/>
<line x1="498.5" y1="331" x2="498.5" y2="334" stroke="#000"/>
<line x1="498.5" y1="431" x2="498.5" y2="428" stroke="#000"/>
<line x1="532.5" y1="331" x2="532.5" y2="338" stroke="#000"/>
<line x1="532.5" y1="431" x2="532.5" y2="424" stroke="#000"/>
<line x1="566.5" y1="331" x2="566.5" y2="334" stroke="#000"/>
<line x1="566.5" y1="431" x2="566.5" y2="428" stroke="#000"/>
<line x1="599.5" y1="331" x2="599.5" y2="338" stroke="#000"/>
<line x1="599.5" y1="431" x2="599.5" y2="424" stroke="#000"/>
<line x1="633.5" y1="331" x2="633.5" y2="334" stroke="#000"/>
<line x1="633.5" y1="431" x2="633.5" y2="428" stroke="#000"/>
<line x1="666.5" y1="331" x2="666.5" y2="338" stroke="#000"/>
<line x1="666.5" y1="431" x2="666.5" y2="424" stroke="#000"/>
<line x1="700.5" y1="331" x2="700.5" y2="334" stroke="#000"/>
<line x1="700.5" y1="431" x2="700.5" y2="428" stroke="#000"/>
<line x1="733.5" y1="331" x2="733.5" y2="338" stroke="#000"/>
<line x1="733.5" y1="431" x2="733.5" y2="424" stroke="#000"/>
<line x1="63" y1="425.5" x2="66" y2="425.5" stroke="#000"/>
<line x1="63" y1="418.5" x2="66" y2="418.5" stroke="#000"/>
<line x1="63" y1="411.5" x2="70" y2="411.5" stroke="#000"/>
<line x1="63" y1="404.5" x2="66" y2="404.5" stroke="#000"/>
<line x1="63" y1="397.5" x2="66" y2="397.5" stroke="#000"/>
<line x1="63" y1="389.5" x2="66" y2="389.5" stroke="#000"/>
<line x1="63" y1="382.5" x2="66" y2="382.5" stroke="#000"/>
<line x1="63" y1="375.5" x2="70" y2="375.5" stroke="#000"/>
<line x1="63" y1="368.5" x2="66" y2="368.5" stroke="#000"/>
<line x1="63" y1="361.5" x2="66" y2="361.5" stroke="#000"/>
<line x1="63" y1="353.5" x2="66" y2="353.5" stroke="#000"/>
<line x1="63" y1="346.5" x2="66" y2="346.5" stroke="#000"/>
<line x1="63" y1="339.5" x2="70" y2="339.5" stroke="#000"/>
<line x1="63" y1="332.5" x2="66" y2="332.5" stroke="#000"/>
<text x="63.5" y="447" text-anchor="middle" class="tl">-1</text>
<text x="130.5" y="447" text-anchor="middle" class="tl">-0.8</text>
<text x="197.5" y="447" text-anchor="middle" class="tl">-0.6</text>
<text x="264.5" y="447" text-anchor="middle" class="tl">-0.4</text>
<text x="331.5" y="447" text-anchor="middle" class="tl">-0.2</text>
<text x="398.5" y="447" text-anchor="middle" class="tl">0</text>
<text x="465.5" y="447" text-anchor="middle" class="tl">0.2</text>
<text x="532.5" y="447" text-anchor="middle" class="tl">0.4</text>
<text x="599.5" y="447" text-anchor="middle" class="tl">0.6</text>
<text x="666.5" y="447" text-anchor="middle" class="tl">0.8</text>
<text x="733.5" y="447" text-anchor="middle" class="tl">1</text>
<text x="57" y="343.5" text-anchor="end" class="tl">1</text>
<text x="57" y="379.5" text-anchor="end" class="tl">0.5</text>
<text x="57" y="415.5" text-anchor="end" class="tl">0</text>
<text x="398" y="322" text-anchor="middle" class="tt">Noise-Corr</text>
<text x="398" y="463" text-anchor="middle" class="ta">time ( sec )</text>
<line x1="130.5" y1="513" x2="130.5" y2="613" stroke="#d3d3d3"/>
<line x1="197.5" y1="513" x2="197.5" y2="613" stroke="#d3d3d3"/>
<line x1="264.5" y1="513" x2="264.5" y2="613" stroke="#d3d3d3"/>
<line x1="331.5" y1="513" x2="331.5" y2="613" stroke="#d3d3d3"/>
<line x1="398.5" y1="513" x2="398.5" y2="613" stroke="#d3d3d3"/>
<line x1="465.5" y1="513" x2="465.5" y2="613" stroke="#d3d3d3"/>
<line x1="532.5" y1="513" x2="532.5" y2="613" stroke="#d3d3d3"/>
<line x1="599.5" y1="513" x2="599.5" y2="613" stroke="#d3d3d3"/>
<line x1="666.5" y1="513" x2="666.5" y2="613" stroke="#d3d3d3"/>
<line x1="733.5" y1="513" x2="733.5" y2="613" stroke="#d3d3d3"/>
<line x1="63" y1="519.5" x2="733" y2="519.5" stroke="#d3d3d3"/>
<line x1="63" y1="563.5" x2="733" y2="563.5" stroke="#d3d3d3"/>
<line x1="63" y1="606.5" x2="733" y2="606.5" stroke="#d3d3d3"/>
<polyline fill="none" stroke="#000" stroke-width="1" shape-rendering="crispEdges" points="63.0,562.8 66.3,537.1 69.7,521.3 73.0,521.3 76.4,537.1 79.8,562.8 83.1,588.4 86.5,604.2 89.8,604.2 93.2,588.4 96.5,562.8 99.8,537.1 103.2,521.3 106.6,521.3 109.9,537.1 113.2,562.8 116.6,588.4 120.0,604.2 123.3,604.2 126.7,588.4 130.0,562.8 133.3,537.1 136.7,521.3 140.1,521.3 143.4,537.1 146.8,562.8 150.1,588.4 153.4,604.2 156.8,604.2 160.1,588.4 163.5,562.8 166.8,537.1 170.2,521.3 173.6,521.3 176.9,537.1 180.2,562.8 183.6,588.4 186.9,604.2 190.3,604.2 193.7,588.4 197.0,562.8 200.4,537.1 203.7,521.3 207.1,521.3 210.4,537.1 213.8,562.8 217.1,588.4 220.5,604.2 223.8,604.2 227.2,588.4 230.5,562.8 233.8,537.1 237.2,521.3 240.6,521.3 243.9,537.1 247.3,562.8 250.6,588.4 254.0,604.2 257.3,604.2 260.6,588.4 264.0,562.8 267.4,537.1 270.7,521.3 274.1,521.3 277.4,537.1 280.8,562.8 284.1,588.4 287.5,604.2 290.8,604.2 294.1,588.4 297.5,562.7 300.9,537.1 304.2,521.3 307.5,521.3 310.9,537.1 314.2,562.7 317.6,588.4 320.9,604.2 324.3,604.2 327.7,588.4 331.0,562.8 334.4,537.1 337.7,521.3 341.1,521.3 344.4,537.1 347.8,562.7 351.1,588.4 354.4,604.2 357.8,604.2 361.1,588.4 364.5,562.8 367.9,537.1 371.2,521.3 374.6,521.3 377.9,537.1 381.2,562.8 384.6,588.4 387.9,604.2 391.3,604.2 394.6,588.4 398.0,562.8 401.4,537.1 404.7,521.3 408.1,521.3 411.4,537.1 414.8,562.8 418.1,588.4 421.5,604.2 424.8,604.2 428.2,588.4 431.5,562.7 434.9,537.1 438.2,521.3 441.6,521.3 444.9,537.1 448.3,562.8 451.6,588.4 454.9,604.2 458.3,604.2 461.6,588.4 465.0,562.8 468.3,537.1 471.7,521.3 475.1,521.3 478.4,537.1 481.8,562.8 485.1,588.4 488.4,604.2 491.8,604.2 495.2,588.4 498.5,562.7 501.9,537.1 505.2,521.3 508.6,521.3 511.9,537.1 515.2,562.8 518.6,588.4 522.0,604.2 525.3,604.2 528.7,588.4 532.0,562.7 535.3,537.1 538.7,521.3 542.0,521.3 545.4,537.1 548.8,562.8 552.1,588.4 555.5,604.2 558.8,604.2 562.1,588.4 565.5,562.8 568.9,537.1 572.2,521.3 575.5,521.3 578.9,537.1 582.2,562.7 585.6,588.4 589.0,604.2 592.3,604.2 595.6,588.4 599.0,562.8 602.4,537.1 605.7,521.3 609.1,521.3 612.4,537.1 615.8,562.8 619.1,588.4 622.4,604.2 625.8,604.2 629.1,588.4 632.5,562.8 635.9,537.1 639.2,521.3 642.5,521.3 645.9,537.1 649.2,562.7 652.6,588.4 656.0,604.2 659.3,604.2 662.6,588.4 666.0,562.8 669.4,537.1 672.7,521.3 676.1,521.3 679.4,537.1 682.8,562.8 686.1,588.4 689.5,604.2 692.8,604.2 696.2,588.4 699.5,562.7 702.9,537.1 706.2,521.3 709.5,521.3 712.9,537.1 716.2,562.7 719.6,588.4 723.0,604.2 726.3,604.2 729.6,588.4"/>
<rect x="63.5" y="513.5" width="670" height="100" fill="none" stroke="#000"/>
<line x1="63.5" y1="513" x2="63.5" y2="520" stroke="#000"/>
<line x1="63.5" y1="613" x2="63.5" y2="606" stroke="#000"/>
<line x1="76.5" y1="513" x2="76.5" y2="516" stroke="#000"/>
<line x1="76.5" y1="613" x2="76.5" y2="610" stroke="#000"/>
<line x1="90.5" y1="513" x2="90.5" y2="516" stroke="#000"/>
<line x1="90.5" y1="613" x2="90.5" y2="610" stroke="#000"/>
<line x1="103.5" y1="513" x2="103.5" y2="516" stroke="#000"/>
<line x1="103.5" y1="613" x2="103.5" y2="610" stroke="#000"/>
<line x1="117.5" y1="513" x2="117.5" y2="516" stroke="#000"/>
<line x1="117.5" y1="613" x2="117.5" y2="610" stroke="#000"/>
<line x1="130.5" y1="513" x2="130.5" y2="520" stroke="#000"/>
<line x1="130.5" y1="613" x2="130.5" y2="606" stroke="#000"/>
<line x1="143.5" y1="513" x2="143.5" y2="516" stroke="#000"/>
<line x1="143.5" y1="613" x2="143.5" y2="610" stroke="#000"/>
<line x1="157.5" y1="513" x2="157.5" y2="516" stroke="#000"/>
<line x1="157.5" y1="613" x2="157.5" y2="610" stroke="#000"/>
<line x1="170.5" y1="513" x2="170.5" y2="516" stroke="#000"/>
<line x1="170.5" y1="613" x2="170.5" y2="610" stroke="#000"/>
<line x1="184.5" y1="513" x2="184.5" y2="516" stroke="#000"/>
<line x1="184.5" y1="613" x2="184.5" y2="610" stroke="#000"/>
<line x1="197.5" y1="513" x2="197.5" y2="520" stroke="#000"/>
<line x1="197.5" y1="613" x2="197.5" y2="606" stroke="#000"/>
<line x1="210.5" y1="513" x2="210.5" y2="516" stroke="#000"/>
<line x1="210.5" y1="613" x2="210.5" y2="610" stroke="#000"/>
<line x1="224.5" y1="513" x2="224.5" y2="516" stroke="#000"/>
<line x1="224.5" y1="613" x2="224.5" y2="610" stroke="#000"/>
<line x1="237.5" y1="513" x2="237.5" y2="516" stroke="#000"/>
<line x1="237.5" y1="613" x2="237.5" y2="610" stroke="#000"/>
<line x1="251.5" y1="513" x2="251.5" y2="516" stroke="#000"/>
<line x1="251.5" y1="613" x2="251.5" y2="610" stroke="#000"/>
<line x1="264.5" y1="513" x2="264.5" y2="520" stroke="#000"/>
<line x1="264.5" y1="613" x2="264.5" y2="606" stroke="#000"/>
<line x1="277.5" y1="513" x2="277.5" y2="516" stroke="#000"/>
<line x1="277.5" y1="613" x2="277.5" y2="610" stroke="#000"/>
<line x1="291.5" y1="513" x2="291.5" y2="516" stroke="#000"/>
<line x1="291.5" y1="613" x2="291.5" y2="610" stroke="#000"/>
<line x1="304.5" y1="513" x2="304.5" y2="516" stroke="#000"/>
<line x1="304.5" y1="613" x2="304.5" y2="610" stroke="#000"/>
<line x1="318.5" y1="513" x2="318.5" y2="516" stroke="#000"/>
<line x1="318.5" y1="613" x2="318.5" y2="610" stroke="#000"/>
<line x1="331.5" y1="513" x2="331.5" y2="520" stroke="#000"/>
<line x1="331.5" y1="613" x2="331.5" y2="606" stroke="#000"/>
<line x1="344.5" y1="513" x2="344.5" y2="516" stroke="#000"/>
<line x1="344.5" y1="613" x2="344.5" y2="610" stroke="#000"/>
<line x1="358.5" y1="513" x2="358.5" y2="516" stroke="#000"/>
<line x1="358.5" y1="613" x2="358.5" y2="610" stroke="#000"/>
<line x1="371.5" y1="513" x2="371.5" y2="516" stroke="#000"/>
<line x1="371.5" y1="613" x2="371.5" y2="610" stroke="#000"/>
<line x1="385.5" y1="513" x2="385.5" y2="516" stroke="#000"/>
<line x1="385.5" y1="613" x2="385.5" y2="610" stroke="#000"/>
<line x1="398.5" y1="513" x2="398.5" y2="520" stroke="#000"/>
<line x1="398.5" y1="613" x2="398.5" y2="606" stroke="#000"/>
<line x1="411.5" y1="513" x2="411.5" y2="516" stroke="#000"/>
<line x1="411.5" y1="613" x2="411.5" y2="610" stroke="#000"/>
<line x1="425.5" y1="513" x2="425.5" y2="516" stroke="#000"/>
<line x1="425.5" y1="613" x2="425.5" y2="610" stroke="#000"/>
<line x1="438.5" y1="513" x2="438.5" y2="516" stroke="#000"/>
<line x1="438.5" y1="613" x2="438.5" y2="610" stroke="#000"/>
<line x1="452.5" y1="513" x2="452.5" y2="516" stroke="#000"/>
<line x1="452.5" y1="613" x2="452.5" y2="610" stroke="#000"/>
<line x1="465.5" y1="513" x2="465.5" y2="520" stroke="#000"/>
<line x1="465.5" y1="613" x2="465.5" y2="606" stroke="#000"/>
<line x1="478.5" y1="513" x2="478.5" y2="516" stroke="#000"/>
<line x1="478.5" y1="613" x2="478.5" y2="610" stroke="#000"/>
<line x1="492.5" y1="513" x2="492.5" y2="516" stroke="#000"/>
<line x1="492.5" y1="613" x2="492.5" y2="610" stroke="#000"/>
<line x1="505.5" y1="513" x2="505.5" y2="516" stroke="#000"/>
<line x1="505.5" y1="613" x2="505.5" y2="610" stroke="#000"/>
<line x1="519.5" y1="513" x2="519.5" y2="516" stroke="#000"/>
<line x1="519.5" y1="613" x2="519.5" y2="610" stroke="#000"/>
<line x1="532.5" y1="513" x2="532.5" y2="520" stroke="#000"/>
<line x1="532.5" y1="613" x2="532.5" y2="606" stroke="#000"/>
<line x1="545.5" y1="513" x2="545.5" y2="516" stroke="#000"/>
<line x1="545.5" y1="613" x2="545.5" y2="610" stroke="#000"/>
<line x1="559.5" y1="513" x2="559.5" y2="516" stroke="#000"/>
<line x1="559.5" y1="613" x2="559.5" y2="610" stroke="#000"/>
<line x1="572.5" y1="513" x2="572.5" y2="516" stroke="#000"/>
<line x1="572.5" y1="613" x2="572.5" y2="610" stroke="#000"/>
<line x1="586.5" y1="513" x2="586.5" y2="516" stroke="#000"/>
<line x1="586.5" y1="613" x2="586.5" y2="610" stroke="#000"/>
<line x1="599.5" y1="513" x2="599.5" y2="520" stroke="#000"/>
<line x1="599.5" y1="613" x2="599.5" y2="606" stroke="#000"/>
<line x1="612.5" y1="513" x2="612.5" y2="516" stroke="#000"/>
<line x1="612.5" y1="613" x2="612.5" y2="610" stroke="#000"/>
<line x1="626.5" y1="513" x2="626.5" y2="516" stroke="#000"/>
<line x1="626.5" y1="613" x2="626.5" y2="610" stroke="#000"/>
<line x1="639.5" y1="513" x2="639.5" y2="516" stroke="#000"/>
<line x1="639.5" y1="613" x2="639.5" y2="610" stroke="#000"/>
<line x1="653.5" y1="513" x2="653.5" y2="516" stroke="#000"/>
<line x1="653.5" y1="613" x2="653.5" y2="610" stroke="#000"/>
<line x1="666.5" y1="513" x2="666.5" y2="520" stroke="#000"/>
<line x1="666.5" y1="613" x2="666.5" y2="606" stroke="#000"/>
<line x1="679.5" y1="513" x2="679.5" y2="516" stroke="#000"/>
<line x1="679.5" y1="613" x2="679.5" y2="610" stroke="#000"/>
<line x1="693.5" y1="513" x2="693.5" y2="516" stroke="#000"/>
<line x1="693.5" y1="613" x2="693.5" y2="610" stroke="#000"/>
<line x1="706.5" y1="513" x2="706.5" y2="516" stroke="#000"/>
<line x1="706.5" y1="613" x2="706.5" y2="610" stroke="#000"/>
<line x1="720.5" y1="513" x2="720.5" y2="516" stroke="#000"/>
<line x1="720.5" y1="613" x2="720.5" y2="610" stroke="#000"/>
<line x1="733.5" y1="513" x2="733.5" y2="520" stroke="#000"/>
<line x1="733.5" y1="613" x2="733.5" y2="606" stroke="#000"/>
<line x1="63" y1="606.5" x2="70" y2="606.5" stroke="#000"/>
<line x1="63" y1="598.5" x2="66" y2="598.5" stroke="#000"/>
<line x1="63" y1="589.5" x2="66" y2="589.5" stroke="#000"/>
<line x1="63" y1="580.5" x2="66" y2="580.5" stroke="#000"/>
<line x1="63" y1="571.5" x2="66" y2="571.5" stroke="#000"/>
<line x1="63" y1="563.5" x2="70" y2="563.5" stroke="#000"/>
<line x1="63" y1="554.5" x2="66" y2="554.5" stroke="#000"/>
<line x1="63" y1="545.5" x2="66" y2="545.5" stroke="#000"/>
<line x1="63" y1="537.5" x2="66" y2="537.5" stroke="#000"/>
<line x1="63" y1="528.5" x2="66" y2="528.5" stroke="#000"/>
<line x1="63" y1="519.5" x2="70" y2="519.5" stroke="#000"/>
<text x="63.5" y="629" text-anchor="middle" class="tl">0</text>
<text x="130.5" y="629" text-anchor="middle" class="tl">0.1</text>
<text x="197.5" y="629" text-anchor="middle" class="tl">0.2</text>
<text x="264.5" y="629" text-anchor="middle" class="tl">0.3</text>
<text x="331.5" y="629" text-anchor="middle" class="tl">0.4</text>
<text x="398.5" y="629" text-anchor="middle" class="tl">0.5</text>
<text x="465.5" y="629" text-anchor="middle" class="tl">0.6</text>
<text x="532.5" y="629" text-anchor="middle" class="tl">0.7</text>
<text x="599.5" y="629" text-anchor="middle" class="tl">0.8</text>
<text x="666.5" y="629" text-anchor="middle" class="tl">0.9</text>
<text x="733.5" y="629" text-anchor="middle" class="tl">1</text>
<text x="57" y="523.65" text-anchor="end" class="tl">1</text>
<text x="57" y="567.25" text-anchor="end" class="tl">0</text>
<text x="57" y="610.85" text-anchor="end" class="tl">-1</text>
<text x="398" y="504" text-anchor="middle" class="tt">Sine</text>
<text x="398" y="645" text-anchor="middle" class="ta">time ( sec )</text>
<line x1="130.5" y1="695" x2="130.5" y2="795" stroke="#d3d3d3"/>
<line x1="197.5" y1="695" x2="197.5" y2="795" stroke="#d3d3d3"/>
<line x1="264.5" y1="695" x2="264.5" y2="795" stroke="#d3d3d3"/>
<line x1="331.5" y1="695" x2="331.5" y2="795" stroke="#d3d3d3"/>
<line x1="398.5" y1="695" x2="398.5" y2="795" stroke="#d3d3d3"/>
<line x1="465.5" y1="695" x2="465.5" y2="795" stroke="#d3d3d3"/>
<line x1="532.5" y1="695" x2="532.5" y2="795" stroke="#d3d3d3"/>
<line x1="599.5" y1="695" x2="599.5" y2="795" stroke="#d3d3d3"/>
<line x1="666.5" y1="695" x2="666.5" y2="795" stroke="#d3d3d3"/>
<line x1="733.5" y1="695" x2="733.5" y2="795" stroke="#d3d3d3"/>
<line x1="63" y1="703.5" x2="733" y2="703.5" stroke="#d3d3d3"/>
<line x1="63" y1="747.5" x2="733" y2="747.5" stroke="#d3d3d3"/>
<line x1="63" y1="791.5" x2="733" y2="791.5" stroke="#d3d3d3"/>
<polyline fill="none" stroke="#000" stroke-width="1" shape-rendering="crispEdges" points="64.7,747.0 66.4,747.2 68.0,747.5 69.7,747.9 71.4,748.1 73.1,747.9 74.7,747.2 76.4,746.2 78.1,745.2 79.8,744.8 81.4,745.2 83.1,746.5 84.8,748.2 86.4,749.6 88.1,750.3 89.8,749.6 91.5,747.9 93.1,745.5 94.8,743.5 96.5,742.6 98.2,743.5 99.8,745.8 101.5,748.8 103.2,751.4 104.9,752.5 106.6,751.4 108.2,748.5 109.9,744.8 111.6,741.7 113.2,740.5 114.9,741.7 116.6,745.1 118.3,749.5 120.0,753.2 121.6,754.6 123.3,753.2 125.0,749.2 126.6,744.2 128.3,739.9 130.0,738.3 131.7,739.9 133.3,744.5 135.0,750.2 136.7,754.9 138.4,756.8 140.1,754.9 141.7,749.9 143.4,743.5 145.1,738.2 146.8,736.1 148.4,738.2 150.1,743.8 151.8,750.9 153.4,756.7 155.1,759.0 156.8,756.7 158.5,750.6 160.2,742.8 161.8,736.4 163.5,733.9 165.2,736.4 166.9,743.1 168.5,751.5 170.2,758.5 171.9,761.2 173.5,758.5 175.2,751.2 176.9,742.1 178.6,734.7 180.2,731.7 181.9,734.7 183.6,742.4 185.3,752.2 186.9,760.2 188.6,763.4 190.3,760.2 192.0,751.9 193.7,741.5 195.3,732.9 197.0,729.6 198.7,732.9 200.4,741.8 202.0,752.9 203.7,762.0 205.4,765.5 207.1,762.0 208.7,752.6 210.4,740.8 212.1,731.1 213.7,727.4 215.4,731.1 217.1,741.1 218.8,753.6 220.4,763.8 222.1,767.7 223.8,763.8 225.5,753.2 227.2,740.1 228.8,729.4 230.5,725.2 232.2,729.4 233.8,740.4 235.5,754.2 237.2,765.5 238.9,769.9 240.6,765.5 242.2,753.9 243.9,739.4 245.6,727.6 247.3,723.0 248.9,727.6 250.6,739.7 252.3,754.9 254.0,767.3 255.6,772.1 257.3,767.3 259.0,754.6 260.7,738.8 262.3,725.8 264.0,720.8 265.7,725.8 267.4,739.1 269.0,755.6 270.7,769.0 272.4,774.2 274.1,769.0 275.7,755.3 277.4,738.1 279.1,724.1 280.8,718.7 282.4,724.1 284.1,738.4 285.8,756.2 287.4,770.8 289.1,776.4 290.8,770.8 292.5,755.9 294.1,737.4 295.8,722.3 297.5,716.5 299.2,722.3 300.9,737.7 302.5,756.9 304.2,772.6 305.9,778.6 307.5,772.6 309.2,756.6 310.9,736.7 312.6,720.5 314.2,714.3 315.9,720.5 317.6,737.0 319.3,757.6 320.9,774.3 322.6,780.8 324.3,774.3 326.0,757.3 327.7,736.1 329.3,718.8 331.0,712.1 332.7,718.8 334.4,736.4 336.0,758.3 337.7,776.1 339.4,783.0 341.1,776.1 342.7,758.0 344.4,735.4 346.1,717.0 347.8,709.9 349.4,717.0 351.1,735.7 352.8,758.9 354.4,777.9 356.1,785.1 357.8,777.9 359.5,758.6 361.1,734.7 362.8,715.3 364.5,707.8 366.2,715.3 367.9,735.0 369.5,759.6 371.2,779.6 372.9,787.3 374.5,779.6 376.2,759.3 377.9,734.0 379.6,713.5 381.2,705.6 382.9,713.5 384.6,734.4 386.3,760.3 387.9,781.4 389.6,789.5 391.3,781.4 393.0,760.0 394.6,733.4 396.3,711.7 398.0,703.4 399.7,711.7 401.4,733.4 403.0,760.0 404.7,781.4 406.4,789.5 408.1,781.4 409.7,760.3 411.4,734.4 413.1,713.5 414.8,705.6 416.4,713.5 418.1,734.0 419.8,759.3 421.5,779.6 423.1,787.3 424.8,779.6 426.5,759.6 428.2,735.0 429.8,715.3 431.5,707.8 433.2,715.3 434.9,734.7 436.5,758.6 438.2,777.9 439.9,785.1 441.5,777.9 443.2,758.9 444.9,735.7 446.6,717.0 448.2,709.9 449.9,717.0 451.6,735.4 453.3,758.0 454.9,776.1 456.6,783.0 458.3,776.1 460.0,758.3 461.6,736.4 463.3,718.8 465.0,712.1 466.7,718.8 468.3,736.1 470.0,757.3 471.7,774.3 473.4,780.8 475.1,774.3 476.7,757.6 478.4,737.0 480.1,720.5 481.8,714.3 483.4,720.5 485.1,736.7 486.8,756.6 488.4,772.6 490.1,778.6 491.8,772.6 493.5,756.9 495.2,737.7 496.8,722.3 498.5,716.5 500.2,722.3 501.9,737.4 503.5,755.9 505.2,770.8 506.9,776.4 508.6,770.8 510.2,756.2 511.9,738.4 513.6,724.1 515.2,718.7 516.9,724.1 518.6,738.1 520.3,755.3 522.0,769.0 523.6,774.2 525.3,769.0 527.0,755.6 528.7,739.1 530.3,725.8 532.0,720.8 533.7,725.8 535.3,738.8 537.0,754.6 538.7,767.3 540.4,772.1 542.0,767.3 543.7,754.9 545.4,739.7 547.1,727.6 548.8,723.0 550.4,727.6 552.1,739.4 553.8,753.9 555.5,765.5 557.1,769.9 558.8,765.5 560.5,754.2 562.1,740.4 563.8,729.4 565.5,725.2 567.2,729.4 568.9,740.1 570.5,753.2 572.2,763.8 573.9,767.7 575.5,763.8 577.2,753.6 578.9,741.1 580.6,731.1 582.2,727.4 583.9,731.1 585.6,740.8 587.3,752.6 588.9,762.0 590.6,765.5 592.3,762.0 594.0,752.9 595.6,741.8 597.3,732.9 599.0,729.6 600.7,732.9 602.3,741.5 604.0,751.9 605.7,760.2 607.4,763.4 609.0,760.2 610.7,752.2 612.4,742.4 614.1,734.7 615.8,731.7 617.4,734.7 619.1,742.1 620.8,751.2 622.4,758.5 624.1,761.2 625.8,758.5 627.5,751.5 629.1,743.1 630.8,736.4 632.5,733.9 634.2,736.4 635.9,742.8 637.5,750.6 639.2,756.7 640.9,759.0 642.5,756.7 644.2,750.9 645.9,743.8 647.6,738.2 649.2,736.1 650.9,738.2 652.6,743.5 654.3,749.9 656.0,754.9 657.6,756.8 659.3,754.9 661.0,750.2 662.6,744.5 664.3,739.9 666.0,738.3 667.7,739.9 669.4,744.2 671.0,749.2 672.7,753.2 674.4,754.6 676.1,753.2 677.7,749.5 679.4,745.1 681.1,741.7 682.8,740.5 684.4,741.7 686.1,744.8 687.8,748.5 689.5,751.4 691.1,752.5 692.8,751.4 694.5,748.8 696.2,745.8 697.8,743.5 699.5,742.6 701.2,743.5 702.9,745.5 704.5,747.9 706.2,749.6 707.9,750.3 709.6,749.6 711.2,748.2 712.9,746.5 714.6,745.2 716.2,744.8 717.9,745.2 719.6,746.2 721.3,747.2 723.0,747.9 724.6,748.1 726.3,747.9 728.0,747.5 729.6,747.2 731.3,747.0"/>
<rect x="63.5" y="695.5" width="670" height="100" fill="none" stroke="#000"/>
<line x1="63.5" y1="695" x2="63.5" y2="702" stroke="#000"/>
<line x1="63.5" y1="795" x2="63.5" y2="788" stroke="#000"/>
<line x1="96.5" y1="695" x2="96.5" y2="698" stroke="#000"/>
<line x1="96.5" y1="795" x2="96.5" y2="792" stroke="#000"/>
<line x1="130.5" y1="695" x2="130.5" y2="702" stroke="#000"/>
<line x1="130.5" y1="795" x2="130.5" y2="788" stroke="#000"/>
<line x1="164.5" y1="695" x2="164.5" y2="698" stroke="#000"/>
<line x1="164.5" y1="795" x2="164.5" y2="792" stroke="#000"/>
<line x1="197.5" y1="695" x2="197.5" y2="702" stroke="#000"/>
<line x1="197.5" y1="795" x2="197.5" y2="788" stroke="#000"/>
<line x1="230.5" y1="695" x2="230.5" y2="698" stroke="#000"/>
<line x1="230.5" y1="795" x2="230.5" y2="792" stroke="#000"/>
<line x1="264.5" y1="695" x2="264.5" y2="702" stroke="#000"/>
<line x1="264.5" y1="795" x2="264.5" y2="788" stroke="#000"/>
<line x1="298.5" y1="695" x2="298.5" y2="698" stroke="#000"/>
<line x1="298.5" y1="795" x2="298.5" y2="792" stroke="#000"/>
<line x1="331.5" y1="695" x2="331.5" y2="702" stroke="#000"/>
<line x1="331.5" y1="795" x2="331.5" y2="788" stroke="#000"/>
<line x1="364.5" y1="695" x2="364.5" y2="698" stroke="#000"/>
<line x1="364.5" y1="795" x2="364.5" y2="792" stroke="#000"/>
<line x1="398.5" y1="695" x2="398.5" y2="702" stroke="#000"/>
<line x1="398.5" y1="795" x2="398.5" y2="788" stroke="#000"/>
<line x1="432.5" y1="695" x2="432.5" y2="698" stroke="#000"/>
<line x1="432.5" y1="795" x2="432.5" y2="792" stroke="#000"/>
<line x1="465.5" y1="695" x2="465.5" y2="702" stroke="#000"/>
<line x1="465.5" y1="795" x2="465.5" y2="788" stroke="#000"/>
<line x1="498.5" y1="695" x2="498.5" y2="698" stroke="#000"/>
<line x1="498.5" y1="795" x2="498.5" y2="792" stroke="#000"/>
<line x1="532.5" y1="695" x2="532.5" y2="702" stroke="#000"/>
<line x1="532.5" y1="795" x2="532.5" y2="788" stroke="#000"/>
<line x1="566.5" y1="695" x2="566.5" y2="698" stroke="#000"/>
<line x1="566.5" y1="795" x2="566.5" y2="792" stroke="#000"/>
<line x1="599.5" y1="695" x2="599.5" y2="702" stroke="#000"/>
<line x1="599.5" y1="795" x2="599.5" y2="788" stroke="#000"/>
<line x1="633.5" y1="695" x2="633.5" y2="698" stroke="#000"/>
<line x1="633.5" y1="795" x2="633.5" y2="792" stroke="#000"/>
<line x1="666.5" y1="695" x2="666.5" y2="702" stroke="#000"/>
<line x1="666.5" y1="795" x2="666.5" y2="788" stroke="#000"/>
<line x1="700.5" y1="695" x2="700.5" y2="698" stroke="#000"/>
<line x1="700.5" y1="795" x2="700.5" y2="792" stroke="#000"/>
<line x1="733.5" y1="695" x2="733.5" y2="702" stroke="#000"/>
<line x1="733.5" y1="795" x2="733.5" y2="788" stroke="#000"/>
<line x1="63" y1="791.5" x2="70" y2="791.5" stroke="#000"/>
<line x1="63" y1="782.5" x2="66" y2="782.5" stroke="#000"/>
<line x1="63" y1="773.5" x2="66" y2="773.5" stroke="#000"/>
<line x1="63" y1="764.5" x2="66" y2="764.5" stroke="#000"/>
<line x1="63" y1="756.5" x2="66" y2="756.5" stroke="#000"/>
<line x1="63" y1="747.5" x2="70" y2="747.5" stroke="#000"/>
<line x1="63" y1="738.5" x2="66" y2="738.5" stroke="#000"/>
<line x1="63" y1="730.5" x2="66" y2="730.5" stroke="#000"/>
<line x1="63" y1="721.5" x2="66" y2="721.5" stroke="#000"/>
<line x1="63" y1="712.5" x2="66" y2="712.5" stroke="#000"/>
<line x1="63" y1="703.5" x2="70" y2="703.5" stroke="#000"/>
<text x="63.5" y="811" text-anchor="middle" class="tl">-1</text>
<text x="130.5" y="811" text-anchor="middle" class="tl">-0.8</text>
<text x="197.5" y="811" text-anchor="middle" class="tl">-0.6</text>
<text x="264.5" y="811" text-anchor="middle" class="tl">-0.4</text>
<text x="331.5" y="811" text-anchor="middle" class="tl">-0.2</text>
<text x="398.5" y="811" text-anchor="middle" class="tl">0</text>
<text x="465.5" y="811" text-anchor="middle" class="tl">0.2</text>
<text x="532.5" y="811" text-anchor="middle" class="tl">0.4</text>
<text x="599.5" y="811" text-anchor="middle" class="tl">0.6</text>
<text x="666.5" y="811" text-anchor="middle" class="tl">0.8</text>
<text x="733.5" y="811" text-anchor="middle" class="tl">1</text>
<text x="57" y="707.9" text-anchor="end" class="tl">1</text>
<text x="57" y="751.5" text-anchor="end" class="tl">0</text>
<text x="57" y="795.1" text-anchor="end" class="tl">-1</text>
<text x="398" y="686" text-anchor="middle" class="tt">Sine-Corr</text>
<text x="398" y="827" text-anchor="middle" class="ta">time ( sec )</text>
</svg>
</div>
<!-- vertical scrollbar -->
<div class="a sb" style="left:633px;top:104px;width:16px;height:622px"></div>
<div class="a btn" style="left:633px;top:105px;width:15px;height:15px">
  <svg class="a" style="left:3px;top:4px" width="9" height="6"><path d="M1 5 L4.5 1.5 L8 5" fill="none" stroke="#4D6185" stroke-width="2"/></svg>
</div>
<div class="a btn" style="left:633px;top:121px;width:15px;height:335px;background:linear-gradient(to right,#C9D8FC,#BCCFFB 60%,#B0C6F8)">
  <svg class="a" style="left:3px;top:161px" width="8" height="9"><path d="M0 1.5h8M0 3.5h8M0 5.5h8M0 7.5h8" stroke="#EEF3FE" stroke-width="1"/><path d="M1 2.5h7M1 4.5h7M1 6.5h7M1 8.5h7" stroke="#8CB0F8" stroke-width="1"/></svg>
</div>
<div class="a btn" style="left:633px;top:710px;width:15px;height:15px">
  <svg class="a" style="left:3px;top:4px" width="9" height="6"><path d="M1 1 L4.5 4.5 L8 1" fill="none" stroke="#4D6185" stroke-width="2"/></svg>
</div>
<!-- horizontal scrollbar -->
<div class="a" style="left:3px;top:726px;width:630px;height:18px;background:linear-gradient(#F3F1EC,#FEFEFB)"></div>
<div class="a" style="left:633px;top:726px;width:16px;height:18px;background:#ECE9D8"></div>
<div class="a btn" style="left:4px;top:727px;width:15px;height:15px">
  <svg class="a" style="left:2px;top:2px" width="7" height="10"><path d="M6 1 L2 5 L6 9" fill="none" stroke="#4D6185" stroke-width="2"/></svg>
</div>
<div class="a btn" style="left:21px;top:727px;width:497px;height:15px;background:linear-gradient(#C9D8FC,#BCCFFB 60%,#B0C6F8)">
  <svg class="a" style="left:244px;top:3px" width="9" height="8"><path d="M1.5 0v8M3.5 0v8M5.5 0v8M7.5 0v8" stroke="#EEF3FE" stroke-width="1"/><path d="M2.5 1v7M4.5 1v7M6.5 1v7M8.5 1v7" stroke="#8CB0F8" stroke-width="1"/></svg>
</div>
<div class="a btn" style="left:616px;top:727px;width:15px;height:15px">
  <svg class="a" style="left:5px;top:3px" width="6" height="9"><path d="M1 1 L4.5 4.5 L1 8" fill="none" stroke="#4D6185" stroke-width="2"/></svg>
</div>

<!-- RIGHT PANEL -->
<!-- splitter / outer -->
<div class="a" style="left:652px;top:77px;width:4px;height:668px;background:#ECE9D8"></div>
<!-- Network caption -->
<div class="a cap" style="left:656px;top:77px;width:368px;height:18px"></div>
<div class="a" style="left:661px;top:81px;font:11.5px 'Liberation Serif',serif;white-space:nowrap">Network</div>
<svg class="a" style="left:970px;top:80px" width="54" height="14">
  <path d="M5 6 L13 6 L9 10 Z" fill="#000"/>
  <path d="M24.5 2.5 V9 M28 2.5 V9 M24 2.5 H28.5 M22.5 9.5 H30.5 M26.5 9.5 V13.5" stroke="#000" stroke-width="1.2" fill="none"/><rect x="27" y="2" width="2" height="7.5" fill="#000"/>
  <path d="M39.5 3.5 L47 11 M47 3.5 L39.5 11" stroke="#000" stroke-width="1.6"/>
</svg>
<!-- Network toolbar -->
<div class="a" style="left:656px;top:95px;width:368px;height:27px;border-radius:0 0 3px 0;box-shadow:inset -1px 0 0 #4A70B0;background:linear-gradient(#E3EFFF 0,#D6E6FD 8px,#C4DAFA 14px,#A9C6F3 20px,#8AAEE8 25px,#3B619C 26px,#3B619C 27px)"></div>
<svg class="a" style="left:656px;top:95px" width="200" height="27">
  <g fill="#27417F"><rect x="3" y="3.5" width="2" height="2"/><rect x="3" y="7.5" width="2" height="2"/><rect x="3" y="11.5" width="2" height="2"/><rect x="3" y="15.5" width="2" height="2"/></g>
  <!-- add -->
  <path d="M13.5 4.5 H20 L22 6.5 V18.5 H13.5 Z" fill="#D8E4EC" stroke="#6A9AB0"/>
  <path d="M19.5 9.5 H26 L29 12.5 V21.5 H19.5 Z" fill="#E4ECF0" stroke="#6A9AB0"/>
  <path d="M21 13.5 H27 M21 15.5 H27 M21 17.5 H27" stroke="#A8C0CC" stroke-width="1"/>
  <path d="M11 18 H21 M16 13 V23" stroke="#3A88D0" stroke-width="3.2"/>
  <rect x="36" y="4" width="1" height="19" fill="#6A8CCB"/><rect x="37" y="4" width="1" height="19" fill="#F8F8F8"/>
  <!-- gray floppy + doc -->
  <rect x="42.5" y="4.5" width="15" height="15" rx="1.5" fill="#B8B8B8" stroke="#989898"/>
  <rect x="45" y="5" width="10" height="6" fill="#D8D8D8"/>
  <path d="M50.5 10.5 H57 L60.5 14 V22.5 H50.5 Z" fill="#DCDCDC" stroke="#A0A0A0"/>
  <path d="M52 15.5 H59 M52 17.5 H59 M52 19.5 H59" stroke="#B8B8B8"/>
  <!-- gray plot floppy -->
  <rect x="65.5" y="4.5" width="18" height="18" rx="1.5" fill="#C4C4C4" stroke="#A8A8A8"/>
  <rect x="67" y="6" width="15" height="8" fill="#B4B4B4"/>
  <path d="M68 12 L71 8 L73 11 L76 7 L79 10" fill="none" stroke="#909090"/>
  <rect x="68" y="15.5" width="13" height="6" fill="#E0E0E0" stroke="#A8A8A8" stroke-width="0.8"/>
  <!-- gray excel doc -->
  <path d="M93.5 4.5 H104 L108.5 9 V23.5 H93.5 Z" fill="#D8D8D8" stroke="#A8A8A8"/>
  <path d="M96 12.5 H106 M96 15.5 H106 M96 18.5 H106 M99.5 10 V22 M103 10 V22" stroke="#B8B8B8"/>
  <rect x="89.5" y="6.5" width="9" height="8" fill="#B0B0B0" stroke="#909090"/>
  <path d="M92 8.5 L96 12.5 M96 8.5 L92 12.5" stroke="#707070"/>
  <rect x="114" y="4" width="1" height="19" fill="#6A8CCB"/><rect x="115" y="4" width="1" height="19" fill="#F8F8F8"/>
  <!-- red ! -->
  <path d="M127 4.5 L131 4.5 L130.2 17 L127.8 17 Z" fill="#E01818"/>
  <circle cx="129" cy="20.5" r="2" fill="#E01818"/>
  <!-- run -->
  <path d="M143 7 L150 5 L155 17 L148 19 Z" fill="#F0F0F0" stroke="#505050"/>
  <path d="M146 9 L153 7 L158 19 L151 21 Z" fill="#E0E0E0" stroke="#404040"/>
  <path d="M153 14 L161 19 L153 23 Z" fill="#2070E0"/>
  <rect x="168" y="4" width="1" height="19" fill="#6A8CCB"/><rect x="169" y="4" width="1" height="19" fill="#F8F8F8"/>
  <rect x="175.5" y="5.5" width="17" height="16" fill="none" stroke="#3080E0" stroke-dasharray="3 2"/>
</svg>
<!-- tab row -->
<div class="a" style="left:656px;top:122px;width:368px;height:1px;background:#fff"></div><div class="a" style="left:656px;top:122px;width:1px;height:320px;background:#fff"></div><div class="a" style="left:658px;top:124px;width:138px;height:20px;background:#ADD8E6;border-right:1px solid #716F64"></div>
<div class="a" style="left:663px;top:126px;font:11px 'Liberation Sans',sans-serif;white-space:nowrap">demo43 - AutoCorrelation</div>
<svg class="a" style="left:1009px;top:127px" width="12" height="12"><path d="M2 2 L10 10 M10 2 L2 10" stroke="#E02020" stroke-width="2.4"/></svg>

<!-- diagram frame -->
<div class="a" style="left:660px;top:144px;width:361px;height:297px;border-top:1px solid #ACA899;border-left:1px solid #ACA899;border-right:1px solid #fff;border-bottom:1px solid #fff"></div>
<div class="a" style="left:661px;top:145px;width:359px;height:295px;border-top:1px solid #716F64;border-left:1px solid #716F64;border-right:1px solid #F1EFE2;border-bottom:1px solid #F1EFE2;overflow:hidden">
<svg width="358" height="293" viewBox="662 146 358 293" style="display:block">
<style>.nt{font:11px "Liberation Sans",sans-serif}</style>
<path d="M737,168.5 L926,168.5" fill="none" stroke="#1E90FF" stroke-width="1.2"/>
<path d="M926 165.5 L932 168.5 L926 171.5 Z" fill="#1E90FF"/>
<path d="M738,171 L796,198" fill="none" stroke="#1E90FF" stroke-width="1.2"/>
<path d="M797.5 196 L802 201 L795.5 201.5 Z" fill="#1E90FF"/>
<path d="M855,201.5 L925,201.5" fill="none" stroke="#1E90FF" stroke-width="1.2"/>
<path d="M925 198.5 L931 201.5 L925 204.5 Z" fill="#1E90FF"/>
<path d="M734,182 Q724,225 701.5,306" fill="none" stroke="#1E90FF" stroke-width="1.2"/>
<path d="M729,258 L722,306" fill="none" stroke="#1E90FF" stroke-width="1.2"/>
<path d="M697 301 L701 309 L705 301 L701 303 Z" fill="#1E90FF"/>
<path d="M717.5 301 L721.5 309 L725.5 301 L721.5 303 Z" fill="#1E90FF"/>
<path d="M730,249.5 L920,249.5" fill="none" stroke="#1E90FF" stroke-width="1.2"/>
<path d="M920 246.5 L926 249.5 L920 252.5 Z" fill="#1E90FF"/>
<path d="M731,252 L797,287" fill="none" stroke="#1E90FF" stroke-width="1.2"/>
<path d="M798.5 285 L803 290 L796.5 290.5 Z" fill="#1E90FF"/>
<path d="M862,290.5 L880,290.5 L914,292.5 L925,292.5" fill="none" stroke="#1E90FF" stroke-width="1.2"/>
<path d="M925 289.5 L931 292.5 L925 295.5 Z" fill="#1E90FF"/>
<path d="M741,327.5 L922,327.5" fill="none" stroke="#1E90FF" stroke-width="1.2"/>
<path d="M922 324.5 L928 327.5 L922 330.5 Z" fill="#1E90FF"/>
<path d="M741,330 L803,359" fill="none" stroke="#1E90FF" stroke-width="1.2"/>
<path d="M804.5 357.5 L809 362.5 L802.5 363 Z" fill="#1E90FF"/>
<path d="M869,363 L915,367.5 L926,368" fill="none" stroke="#1E90FF" stroke-width="1.2"/>
<path d="M926 365 L932 368 L926 371 Z" fill="#1E90FF"/>
<rect x="681" y="154" width="55" height="27" fill="#3CB371"/>
<rect x="736" y="154" width="1.2" height="28" fill="#000"/>
<rect x="681" y="181" width="56" height="1.2" fill="#000"/>
<rect x="683.5" y="156.5" width="46" height="22" fill="none" stroke="#808080" stroke-dasharray="3 2"/>
<rect x="686.5" y="159.5" width="10" height="11" fill="#FFA500" stroke="rgba(110,70,0,0.4)" stroke-width="1"/>
<path d="M687.5 169.5 V160.5 H695.5" fill="none" stroke="#FFD080" stroke-width="1"/>
<path d="M697.5 159 V171.5 H686" fill="none" stroke="rgba(255,255,255,0.45)" stroke-width="1"/>
<text x="700" y="170" class="nt">Noise</text>
<rect x="686" y="174" width="42" height="2.2" fill="#0000FF"/>
<path d="M731 164.5 L735 168 L731 171.5 Z" fill="#FF0000"/>
<rect x="680" y="236" width="49" height="27" fill="#3CB371"/>
<rect x="729" y="236" width="1.2" height="28" fill="#000"/>
<rect x="680" y="263" width="50" height="1.2" fill="#000"/>
<rect x="682.5" y="238.5" width="40" height="22" fill="none" stroke="#808080" stroke-dasharray="3 2"/>
<rect x="685.5" y="241.5" width="10" height="11" fill="#FFA500" stroke="rgba(110,70,0,0.4)" stroke-width="1"/>
<path d="M686.5 251.5 V242.5 H694.5" fill="none" stroke="#FFD080" stroke-width="1"/>
<path d="M696.5 241 V253.5 H685" fill="none" stroke="rgba(255,255,255,0.45)" stroke-width="1"/>
<text x="699" y="252" class="nt">Sine</text>
<rect x="685" y="256" width="36" height="2.2" fill="#0000FF"/>
<path d="M724 246.5 L728 250 L724 253.5 Z" fill="#FF0000"/>
<rect x="802" y="187" width="53" height="27" fill="#FFC0CB"/>
<rect x="855" y="187" width="1.2" height="28" fill="#000"/>
<rect x="802" y="214" width="54" height="1.2" fill="#000"/>
<rect x="808.5" y="189.5" width="40" height="22" fill="none" stroke="#808080" stroke-dasharray="3 2"/>
<rect x="811.5" y="192.5" width="10" height="11" fill="#FFA500" stroke="rgba(110,70,0,0.4)" stroke-width="1"/>
<path d="M812.5 202.5 V193.5 H820.5" fill="none" stroke="#FFD080" stroke-width="1"/>
<path d="M822.5 192 V204.5 H811" fill="none" stroke="rgba(255,255,255,0.45)" stroke-width="1"/>
<text x="825" y="203" class="nt">Corr</text>
<rect x="811" y="207" width="36" height="2.2" fill="#0000FF"/>
<path d="M803 197.5 L807 201 L803 204.5 Z" fill="#0000FF"/>
<path d="M850 197.5 L854 201 L850 204.5 Z" fill="#FF0000"/>
<rect x="803" y="276" width="59" height="27" fill="#FFC0CB"/>
<rect x="862" y="276" width="1.2" height="28" fill="#000"/>
<rect x="803" y="303" width="60" height="1.2" fill="#000"/>
<rect x="809.5" y="278.5" width="46" height="22" fill="none" stroke="#808080" stroke-dasharray="3 2"/>
<rect x="812.5" y="281.5" width="10" height="11" fill="#FFA500" stroke="rgba(110,70,0,0.4)" stroke-width="1"/>
<path d="M813.5 291.5 V282.5 H821.5" fill="none" stroke="#FFD080" stroke-width="1"/>
<path d="M823.5 281 V293.5 H812" fill="none" stroke="rgba(255,255,255,0.45)" stroke-width="1"/>
<text x="826" y="292" class="nt">Corr2</text>
<rect x="812" y="296" width="42" height="2.2" fill="#0000FF"/>
<path d="M804 286.5 L808 290 L804 293.5 Z" fill="#0000FF"/>
<path d="M857 286.5 L861 290 L857 293.5 Z" fill="#FF0000"/>
<rect x="809" y="349" width="59" height="27" fill="#FFC0CB"/>
<rect x="868" y="349" width="1.2" height="28" fill="#000"/>
<rect x="809" y="376" width="60" height="1.2" fill="#000"/>
<rect x="815.5" y="351.5" width="46" height="22" fill="none" stroke="#808080" stroke-dasharray="3 2"/>
<rect x="818.5" y="354.5" width="10" height="11" fill="#FFA500" stroke="rgba(110,70,0,0.4)" stroke-width="1"/>
<path d="M819.5 364.5 V355.5 H827.5" fill="none" stroke="#FFD080" stroke-width="1"/>
<path d="M829.5 354 V366.5 H818" fill="none" stroke="rgba(255,255,255,0.45)" stroke-width="1"/>
<text x="832" y="365" class="nt">Corr3</text>
<rect x="818" y="369" width="42" height="2.2" fill="#0000FF"/>
<path d="M810 359.5 L814 363 L810 366.5 Z" fill="#0000FF"/>
<path d="M863 359.5 L867 363 L863 366.5 Z" fill="#FF0000"/>
<rect x="685" y="310" width="55" height="31" fill="#FFC0CB"/>
<rect x="740" y="310" width="1.2" height="32" fill="#000"/>
<rect x="685" y="341" width="56" height="1.2" fill="#000"/>
<rect x="687.5" y="316.5" width="46" height="22" fill="none" stroke="#808080" stroke-dasharray="3 2"/>
<rect x="690.5" y="319.5" width="10" height="11" fill="#FFA500" stroke="rgba(110,70,0,0.4)" stroke-width="1"/>
<path d="M691.5 329.5 V320.5 H699.5" fill="none" stroke="#FFD080" stroke-width="1"/>
<path d="M701.5 319 V331.5 H690" fill="none" stroke="rgba(255,255,255,0.45)" stroke-width="1"/>
<text x="704" y="330" class="nt">Mixer</text>
<rect x="690" y="334" width="42" height="2.2" fill="#0000FF"/>
<path d="M696.5 311 L704.5 311 L700.5 315 Z" fill="#0000FF"/>
<path d="M717.5 311 L725.5 311 L721.5 315 Z" fill="#0000FF"/>
<path d="M735 324.5 L739 328 L735 331.5 Z" fill="#FF0000"/>
<rect x="932" y="154" width="80" height="26" fill="#FFFF00"/>
<rect x="932" y="154" width="80" height="2" fill="#000"/>
<rect x="932" y="154" width="1.5" height="26" fill="#000"/>
<rect x="939.5" y="157.5" width="72" height="21" fill="none" stroke="#FF0000" stroke-dasharray="3 2"/>
<rect x="942.5" y="160.5" width="10" height="11" fill="#FFA500" stroke="rgba(110,70,0,0.4)" stroke-width="1"/>
<path d="M943.5 170.5 V161.5 H951.5" fill="none" stroke="#FFD080" stroke-width="1"/>
<path d="M953.5 160 V172.5 H942" fill="none" stroke="rgba(255,255,255,0.45)" stroke-width="1"/>
<text x="956" y="171" class="nt">Viewer [1]</text>
<rect x="942" y="175" width="66" height="2.2" fill="#0000FF"/>
<path d="M933 164.5 L937 168 L933 171.5 Z" fill="#0000FF"/>
<rect x="931" y="188" width="91" height="27" fill="#FFFF00"/>
<rect x="1022" y="188" width="1.2" height="28" fill="#000"/>
<rect x="931" y="215" width="92" height="1.2" fill="#000"/>
<rect x="937.5" y="190.5" width="78" height="22" fill="none" stroke="#808080" stroke-dasharray="3 2"/>
<rect x="940.5" y="193.5" width="10" height="11" fill="#FFA500" stroke="rgba(110,70,0,0.4)" stroke-width="1"/>
<path d="M941.5 203.5 V194.5 H949.5" fill="none" stroke="#FFD080" stroke-width="1"/>
<path d="M951.5 193 V205.5 H940" fill="none" stroke="rgba(255,255,255,0.45)" stroke-width="1"/>
<text x="954" y="204" class="nt">Viewer2 [2]</text>
<rect x="940" y="208" width="74" height="2.2" fill="#0000FF"/>
<path d="M932 198.5 L936 202 L932 205.5 Z" fill="#0000FF"/>
<rect x="926" y="236" width="87" height="27" fill="#FFFF00"/>
<rect x="1013" y="236" width="1.2" height="28" fill="#000"/>
<rect x="926" y="263" width="88" height="1.2" fill="#000"/>
<rect x="932.5" y="238.5" width="74" height="22" fill="none" stroke="#808080" stroke-dasharray="3 2"/>
<rect x="935.5" y="241.5" width="10" height="11" fill="#FFA500" stroke="rgba(110,70,0,0.4)" stroke-width="1"/>
<path d="M936.5 251.5 V242.5 H944.5" fill="none" stroke="#FFD080" stroke-width="1"/>
<path d="M946.5 241 V253.5 H935" fill="none" stroke="rgba(255,255,255,0.45)" stroke-width="1"/>
<text x="949" y="252" class="nt">Viewer3 [3]</text>
<rect x="935" y="256" width="70" height="2.2" fill="#0000FF"/>
<path d="M927 246.5 L931 250 L927 253.5 Z" fill="#0000FF"/>
<rect x="931" y="278" width="91" height="27" fill="#FFFF00"/>
<rect x="1022" y="278" width="1.2" height="28" fill="#000"/>
<rect x="931" y="305" width="92" height="1.2" fill="#000"/>
<rect x="937.5" y="280.5" width="78" height="22" fill="none" stroke="#808080" stroke-dasharray="3 2"/>
<rect x="940.5" y="283.5" width="10" height="11" fill="#FFA500" stroke="rgba(110,70,0,0.4)" stroke-width="1"/>
<path d="M941.5 293.5 V284.5 H949.5" fill="none" stroke="#FFD080" stroke-width="1"/>
<path d="M951.5 283 V295.5 H940" fill="none" stroke="rgba(255,255,255,0.45)" stroke-width="1"/>
<text x="954" y="294" class="nt">Viewer4 [4]</text>
<rect x="940" y="298" width="74" height="2.2" fill="#0000FF"/>
<path d="M932 288.5 L936 292 L932 295.5 Z" fill="#0000FF"/>
<rect x="928" y="314" width="87" height="27" fill="#FFFF00"/>
<rect x="1015" y="314" width="1.2" height="28" fill="#000"/>
<rect x="928" y="341" width="88" height="1.2" fill="#000"/>
<rect x="934.5" y="316.5" width="74" height="22" fill="none" stroke="#808080" stroke-dasharray="3 2"/>
<rect x="937.5" y="319.5" width="10" height="11" fill="#FFA500" stroke="rgba(110,70,0,0.4)" stroke-width="1"/>
<path d="M938.5 329.5 V320.5 H946.5" fill="none" stroke="#FFD080" stroke-width="1"/>
<path d="M948.5 319 V331.5 H937" fill="none" stroke="rgba(255,255,255,0.45)" stroke-width="1"/>
<text x="951" y="330" class="nt">Viewer5 [5]</text>
<rect x="937" y="334" width="70" height="2.2" fill="#0000FF"/>
<path d="M929 324.5 L933 328 L929 331.5 Z" fill="#0000FF"/>
<rect x="932" y="355" width="91" height="27" fill="#FFFF00"/>
<rect x="1023" y="355" width="1.2" height="28" fill="#000"/>
<rect x="932" y="382" width="92" height="1.2" fill="#000"/>
<rect x="938.5" y="357.5" width="78" height="22" fill="none" stroke="#808080" stroke-dasharray="3 2"/>
<rect x="941.5" y="360.5" width="10" height="11" fill="#FFA500" stroke="rgba(110,70,0,0.4)" stroke-width="1"/>
<path d="M942.5 370.5 V361.5 H950.5" fill="none" stroke="#FFD080" stroke-width="1"/>
<path d="M952.5 360 V372.5 H941" fill="none" stroke="rgba(255,255,255,0.45)" stroke-width="1"/>
<text x="955" y="371" class="nt">Viewer6 [6]</text>
<rect x="941" y="375" width="74" height="2.2" fill="#0000FF"/>
<path d="M933 365.5 L937 369 L933 372.5 Z" fill="#0000FF"/>
</svg>
</div>
<svg class="a" style="left:658px;top:340px" width="16" height="24">
<path d="M1.5 2.5 L1.5 18.5 L5.2 14.8 L8.2 21.8 L10.8 20.8 L8 14.2 L12.8 14.2 Z" fill="#fff" stroke="#000" stroke-width="1" stroke-linejoin="miter"/>
</svg>
<!-- diagram h scrollbar -->
<div class="a" style="left:662px;top:423px;width:357px;height:16px;background:linear-gradient(#F3F1EC,#FEFEFB)"></div>
<div class="a btn" style="left:663px;top:423px;width:15px;height:15px">
  <svg class="a" style="left:4px;top:3px" width="6" height="9"><path d="M5 1 L1.5 4.5 L5 8" fill="none" stroke="#4D6185" stroke-width="2"/></svg>
</div>
<div class="a btn" style="left:679px;top:423px;width:302px;height:15px;background:linear-gradient(#C9D8FC,#BCCFFB 60%,#B0C6F8)">
  <svg class="a" style="left:145px;top:3px" width="9" height="8"><path d="M1.5 0v8M3.5 0v8M5.5 0v8M7.5 0v8" stroke="#EEF3FE" stroke-width="1"/><path d="M2.5 1v7M4.5 1v7M6.5 1v7M8.5 1v7" stroke="#8CB0F8" stroke-width="1"/></svg>
</div>
<div class="a btn" style="left:1002px;top:423px;width:15px;height:15px">
  <svg class="a" style="left:5px;top:3px" width="6" height="9"><path d="M1 1 L4.5 4.5 L1 8" fill="none" stroke="#4D6185" stroke-width="2"/></svg>
</div>
<!-- status panel -->
<div class="a" style="left:656px;top:445px;width:368px;height:65px;border:1px solid #000;border-right:1px solid #000;background:#ECE9D8"></div>
<div class="a" style="left:662px;top:461px;letter-spacing:0.45px;font:11px 'Liberation Sans',sans-serif;white-space:nowrap">Viewer6 updated.</div>
<div class="a" style="left:897px;top:460px;width:13px;height:13px;border:1px solid #1C5180;background:linear-gradient(135deg,#DCDCD7,#fff)">
  <svg class="a" style="left:1px;top:1px" width="9" height="9"><path d="M1 4.5 L3.5 7 L8 1.5" fill="none" stroke="#21A121" stroke-width="2"/></svg>
</div>
<div class="a" style="left:915px;top:461px;letter-spacing:0.3px;font:11px 'Liberation Sans',sans-serif;white-space:nowrap">Auto</div>
<svg class="a" style="left:950px;top:452px" width="70" height="32">
  <defs>
    <radialGradient id="pb" cx="45%" cy="35%" r="60%"><stop offset="0" stop-color="#7CC8FF"/><stop offset="0.6" stop-color="#1E7BEA"/><stop offset="1" stop-color="#0B4FC8"/></radialGradient>
    <radialGradient id="sb" cx="45%" cy="35%" r="60%"><stop offset="0" stop-color="#D8D8D8"/><stop offset="0.6" stop-color="#A8A8A8"/><stop offset="1" stop-color="#808080"/></radialGradient>
  </defs>
  <circle cx="16" cy="15.5" r="14" fill="url(#pb)" stroke="#0A45B8" stroke-width="1"/>
  <path d="M11 7 L24 15.5 L11 24 Z" fill="#fff"/>
  <circle cx="51" cy="15.5" r="14" fill="url(#sb)" stroke="#888" stroke-width="1"/>
  <rect x="45" y="9.5" width="12" height="12" fill="#E4E4E4"/>
</svg>
<div class="a" style="left:660px;top:489px;width:360px;height:12px;border:1px solid #8C8C8C;border-radius:3px;background:#fff"></div>
<svg class="a" style="left:662px;top:491px" width="357" height="8">
  <linearGradient id="gg" x1="0" y1="0" x2="0" y2="1"><stop offset="0" stop-color="#8EE88E"/><stop offset="0.45" stop-color="#2ED02E"/><stop offset="1" stop-color="#5EDC5E"/></linearGradient><pattern id="pg" x="0" y="0" width="8" height="8" patternUnits="userSpaceOnUse"><rect x="2" y="1" width="6" height="6" fill="url(#gg)"/></pattern>
  <rect x="0" y="0" width="357" height="8" fill="url(#pg)"/>
</svg>
<!-- Properties caption -->
<div class="a cap" style="left:656px;top:515px;width:368px;height:17px"></div>
<div class="a" style="left:661px;top:518px;font:11.5px 'Liberation Serif',serif;white-space:nowrap">Properties</div>
<svg class="a" style="left:970px;top:517px" width="54" height="14">
  <path d="M5 6 L13 6 L9 10 Z" fill="#000"/>
  <path d="M24.5 2.5 V9 M28 2.5 V9 M24 2.5 H28.5 M22.5 9.5 H30.5 M26.5 9.5 V13.5" stroke="#000" stroke-width="1.2" fill="none"/><rect x="27" y="2" width="2" height="7.5" fill="#000"/>
  <path d="M39.5 3.5 L47 11 M47 3.5 L39.5 11" stroke="#000" stroke-width="1.6"/>
</svg>
<!-- property grid -->
<div class="a" style="left:656px;top:535px;width:367px;height:145px;border-top:1px solid #ACA899;border-left:1px solid #ACA899;background:#D4D0C8;overflow:hidden">
  <div class="a" style="left:14px;top:1px;width:160px;height:16px;background:#fff"></div>
<div class="a" style="left:175px;top:1px;width:174px;height:16px;background:#fff"></div>
<div class="a" style="left:17px;top:3px;color:#000;font:11px Liberation Sans,sans-serif;white-space:nowrap">Vertical Grid Type</div>
<div class="a" style="left:178px;top:3px;font:bold 11px Liberation Sans,sans-serif;white-space:nowrap">Coarse</div>
<div class="a" style="left:14px;top:18px;width:160px;height:16px;background:#fff"></div>
<div class="a" style="left:175px;top:18px;width:174px;height:16px;background:#fff"></div>
<div class="a" style="left:17px;top:20px;color:#000;font:11px Liberation Sans,sans-serif;white-space:nowrap">Major Grid Style</div>
<div class="a" style="left:178px;top:20px;font:bold 11px Liberation Sans,sans-serif;white-space:nowrap">Solid</div>
<div class="a" style="left:14px;top:35px;width:160px;height:16px;background:#fff"></div>
<div class="a" style="left:175px;top:35px;width:174px;height:16px;background:#fff"></div>
<div class="a" style="left:17px;top:37px;color:#000;font:11px Liberation Sans,sans-serif;white-space:nowrap">Major Grid Color</div>
<div class="a" style="left:176px;top:37px;width:20px;height:14px;border:1px solid #000;background:#D3D3D3"></div>
<div class="a" style="left:203px;top:37px;font:bold 11px Liberation Sans,sans-serif;white-space:nowrap">LightGray</div>
<div class="a" style="left:14px;top:52px;width:160px;height:16px;background:#fff"></div>
<div class="a" style="left:175px;top:52px;width:174px;height:16px;background:#fff"></div>
<div class="a" style="left:17px;top:54px;color:#000;font:11px Liberation Sans,sans-serif;white-space:nowrap">Minor Grid Style</div>
<div class="a" style="left:178px;top:54px;font:bold 11px Liberation Sans,sans-serif;white-space:nowrap">Solid</div>
<div class="a" style="left:14px;top:69px;width:160px;height:16px;background:#fff"></div>
<div class="a" style="left:175px;top:69px;width:174px;height:16px;background:#fff"></div>
<div class="a" style="left:17px;top:71px;color:#000;font:11px Liberation Sans,sans-serif;white-space:nowrap">Minor Grid Color</div>
<div class="a" style="left:176px;top:71px;width:20px;height:14px;border:1px solid #000;background:#D3D3D3"></div>
<div class="a" style="left:203px;top:71px;font:bold 11px Liberation Sans,sans-serif;white-space:nowrap">LightGray</div>
<div class="a" style="left:2px;top:90px;width:9px;height:9px;border:1px solid #000;background:#fff"></div>
<div class="a" style="left:4px;top:94px;width:5px;height:1px;background:#000"></div>
<div class="a" style="left:6px;top:92px;width:1px;height:5px;background:#000"></div>
<div class="a" style="left:17px;top:88px;font:bold 11px Liberation Sans,sans-serif;letter-spacing:0.4px;white-space:nowrap">Module</div>
<div class="a" style="left:2px;top:107px;width:9px;height:9px;border:1px solid #000;background:#fff"></div>
<div class="a" style="left:4px;top:111px;width:5px;height:1px;background:#000"></div>
<div class="a" style="left:17px;top:105px;font:bold 11px Liberation Sans,sans-serif;letter-spacing:0.4px;white-space:nowrap">Representation</div>
<div class="a" style="left:14px;top:120px;width:160px;height:16px;background:#fff"></div>
<div class="a" style="left:175px;top:120px;width:174px;height:16px;background:#fff"></div>
<div class="a" style="left:17px;top:122px;color:#ACA899;font:11px Liberation Sans,sans-serif;white-space:nowrap">TimeUint</div>
<div class="a" style="left:14px;top:137px;width:160px;height:16px;background:#fff"></div>
<div class="a" style="left:175px;top:137px;width:174px;height:16px;background:#fff"></div>
<div class="a" style="left:17px;top:139px;color:#000;font:11px Liberation Sans,sans-serif;white-space:nowrap">LegendPosition</div>
<div class="a" style="left:178px;top:139px;font:bold 11px Liberation Sans,sans-serif;white-space:nowrap">None</div>
<div class="a" style="left:349px;top:0;width:17px;height:145px;background:linear-gradient(to right,#F3F1EC,#FEFEFB)"></div>
<div class="a btn" style="left:350px;top:1px;width:15px;height:15px"><svg class="a" style="left:3px;top:4px" width="9" height="6"><path d="M1 5 L4.5 1.5 L8 5" fill="none" stroke="#4D6185" stroke-width="2"/></svg></div>
<div class="a btn" style="left:350px;top:67px;width:15px;height:18px;background:linear-gradient(to right,#C9D8FC,#BCCFFB 60%,#B0C6F8)"><svg class="a" style="left:3px;top:4px" width="8" height="9"><path d="M0 1.5h8M0 3.5h8M0 5.5h8M0 7.5h8" stroke="#EEF3FE"/><path d="M1 2.5h7M1 4.5h7M1 6.5h7M1 8.5h7" stroke="#8CB0F8"/></svg></div>
<div class="a btn" style="left:350px;top:127px;width:15px;height:15px"><svg class="a" style="left:3px;top:4px" width="9" height="6"><path d="M1 1 L4.5 4.5 L8 1" fill="none" stroke="#4D6185" stroke-width="2"/></svg></div>
</div>
<!-- description -->
<div class="a" style="left:656px;top:684px;width:367px;height:59px;border:1px solid #ACA899;background:#ECE9D8"></div>
<div class="a" style="left:662px;top:688px;letter-spacing:0.3px;font:bold 11px 'Liberation Sans',sans-serif;white-space:nowrap">Module</div>

<!-- STATUS BAR -->
<div class="a" style="left:0;top:745px;width:1024px;height:4px;background:linear-gradient(#8C8A78,#B8B4A0 1px,#E0DCC8 3px,#ECE9D8 4px)"></div><div class="a" style="left:0;top:762px;width:1024px;height:4px;background:linear-gradient(#ECE9D8,#DCD8C4 3px,#F4F0DC 4px)"></div>
<div class="a" style="left:0;top:766px;width:1024px;height:2px;background:linear-gradient(#2A66D0,#3A86E8)"></div>
</body></html>
